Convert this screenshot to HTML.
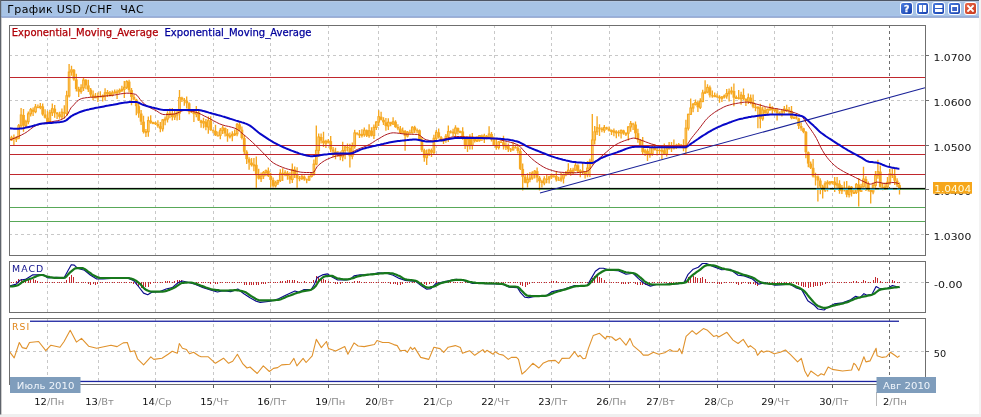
<!DOCTYPE html>
<html lang="ru"><head><meta charset="utf-8"><title>График USD/CHF</title>
<style>html,body{margin:0;padding:0;background:#fff;overflow:hidden}body{width:981px;height:417px}</style></head>
<body>
<svg width="981" height="417" viewBox="0 0 981 417" style="display:block;will-change:transform;font-family:'DejaVu Sans', 'Liberation Sans', sans-serif">
<defs><linearGradient id="tb" x1="0" y1="0" x2="0" y2="1"><stop offset="0" stop-color="#a7c2e7"/><stop offset="0.85" stop-color="#a9c4e8"/><stop offset="1" stop-color="#8eaedb"/></linearGradient><linearGradient id="bb" x1="0" y1="0" x2="1" y2="1"><stop offset="0" stop-color="#4d7fe0"/><stop offset="1" stop-color="#123cab"/></linearGradient><linearGradient id="rb" x1="0" y1="0" x2="1" y2="1"><stop offset="0" stop-color="#e9694a"/><stop offset="1" stop-color="#c6371c"/></linearGradient></defs>
<rect width="981" height="417" fill="#fff"/>
<rect x="979" y="0" width="2" height="417" fill="#f3f3f3"/>
<rect x="0" y="414" width="981" height="3" fill="#efefef"/>
<rect x="0" y="1" width="979" height="15.6" fill="#a7c3e5"/>
<rect x="0" y="1" width="979" height="1" fill="#b4c8e2"/>
<rect x="0" y="15.6" width="979" height="1" fill="#a9c6f3"/>
<rect x="0" y="16.5" width="979" height="1.2" fill="#7890c2"/>
<rect x="0" y="0" width="979" height="1" fill="#4e5665"/>
<rect x="0" y="0" width="1.2" height="414.5" fill="#5f646c"/>
<rect x="1.2" y="17.5" width="0.8" height="397" fill="#c9c9c9"/>
<text x="7.3" y="13.2" font-size="11" fill="#000" xml:space="preserve" textLength="136.3" lengthAdjust="spacing">График USD /CHF  ЧАС</text>
<rect x="900" y="2" width="13" height="13" rx="3" fill="#fff"/>
<rect x="901" y="3" width="11" height="11" rx="2" fill="url(#bb)"/>
<text x="906.7" y="12" font-size="9.4" font-weight="bold" fill="#fff" stroke="#fff" stroke-width="0.3" text-anchor="middle">?</text>
<rect x="916" y="2" width="13" height="13" rx="3" fill="#fff"/>
<rect x="917" y="3" width="11" height="11" rx="2" fill="url(#bb)"/>
<rect x="919" y="5" width="3.2" height="7" fill="#fff"/><rect x="923" y="5" width="3.2" height="7" fill="#fff"/>
<rect x="932" y="2" width="13" height="13" rx="3" fill="#fff"/>
<rect x="933" y="3" width="11" height="11" rx="2" fill="url(#bb)"/>
<rect x="935" y="5" width="7.4" height="3" fill="#fff"/><rect x="935" y="9" width="7.4" height="3" fill="#fff"/>
<rect x="948" y="2" width="13" height="13" rx="3" fill="#fff"/>
<rect x="949" y="3" width="11" height="11" rx="2" fill="url(#bb)"/>
<rect x="951" y="5" width="7.2" height="7.2" fill="#fff"/><rect x="952.2" y="7" width="4.8" height="4" fill="#3b63c8"/>
<rect x="964" y="2" width="13" height="13" rx="3" fill="#fff"/>
<rect x="965" y="3" width="11" height="11" rx="2" fill="url(#rb)"/>
<path d="M967.4 5.4 L973.6 11.6 M973.6 5.4 L967.4 11.6" stroke="#fff" stroke-width="2" fill="none"/>
<g shape-rendering="crispEdges">
<line x1="47.5" y1="25" x2="47.5" y2="255" stroke="#c8c8c8" stroke-dasharray="3 3"/>
<line x1="98.5" y1="25" x2="98.5" y2="255" stroke="#c8c8c8" stroke-dasharray="3 3"/>
<line x1="155.5" y1="25" x2="155.5" y2="255" stroke="#c8c8c8" stroke-dasharray="3 3"/>
<line x1="213.5" y1="25" x2="213.5" y2="255" stroke="#c8c8c8" stroke-dasharray="3 3"/>
<line x1="270.5" y1="25" x2="270.5" y2="255" stroke="#c8c8c8" stroke-dasharray="3 3"/>
<line x1="328.5" y1="25" x2="328.5" y2="255" stroke="#c8c8c8" stroke-dasharray="3 3"/>
<line x1="378.5" y1="25" x2="378.5" y2="255" stroke="#c8c8c8" stroke-dasharray="3 3"/>
<line x1="436.5" y1="25" x2="436.5" y2="255" stroke="#c8c8c8" stroke-dasharray="3 3"/>
<line x1="494.5" y1="25" x2="494.5" y2="255" stroke="#c8c8c8" stroke-dasharray="3 3"/>
<line x1="551.5" y1="25" x2="551.5" y2="255" stroke="#c8c8c8" stroke-dasharray="3 3"/>
<line x1="609.5" y1="25" x2="609.5" y2="255" stroke="#c8c8c8" stroke-dasharray="3 3"/>
<line x1="659.5" y1="25" x2="659.5" y2="255" stroke="#c8c8c8" stroke-dasharray="3 3"/>
<line x1="717.5" y1="25" x2="717.5" y2="255" stroke="#c8c8c8" stroke-dasharray="3 3"/>
<line x1="774.5" y1="25" x2="774.5" y2="255" stroke="#c8c8c8" stroke-dasharray="3 3"/>
<line x1="832.5" y1="25" x2="832.5" y2="255" stroke="#c8c8c8" stroke-dasharray="3 3"/>
<line x1="889.5" y1="25" x2="889.5" y2="255" stroke="#6e6e6e" stroke-dasharray="3 3"/>
<line x1="47.5" y1="261" x2="47.5" y2="312" stroke="#c8c8c8" stroke-dasharray="3 3"/>
<line x1="98.5" y1="261" x2="98.5" y2="312" stroke="#c8c8c8" stroke-dasharray="3 3"/>
<line x1="155.5" y1="261" x2="155.5" y2="312" stroke="#c8c8c8" stroke-dasharray="3 3"/>
<line x1="213.5" y1="261" x2="213.5" y2="312" stroke="#c8c8c8" stroke-dasharray="3 3"/>
<line x1="270.5" y1="261" x2="270.5" y2="312" stroke="#c8c8c8" stroke-dasharray="3 3"/>
<line x1="328.5" y1="261" x2="328.5" y2="312" stroke="#c8c8c8" stroke-dasharray="3 3"/>
<line x1="378.5" y1="261" x2="378.5" y2="312" stroke="#c8c8c8" stroke-dasharray="3 3"/>
<line x1="436.5" y1="261" x2="436.5" y2="312" stroke="#c8c8c8" stroke-dasharray="3 3"/>
<line x1="494.5" y1="261" x2="494.5" y2="312" stroke="#c8c8c8" stroke-dasharray="3 3"/>
<line x1="551.5" y1="261" x2="551.5" y2="312" stroke="#c8c8c8" stroke-dasharray="3 3"/>
<line x1="609.5" y1="261" x2="609.5" y2="312" stroke="#c8c8c8" stroke-dasharray="3 3"/>
<line x1="659.5" y1="261" x2="659.5" y2="312" stroke="#c8c8c8" stroke-dasharray="3 3"/>
<line x1="717.5" y1="261" x2="717.5" y2="312" stroke="#c8c8c8" stroke-dasharray="3 3"/>
<line x1="774.5" y1="261" x2="774.5" y2="312" stroke="#c8c8c8" stroke-dasharray="3 3"/>
<line x1="832.5" y1="261" x2="832.5" y2="312" stroke="#c8c8c8" stroke-dasharray="3 3"/>
<line x1="889.5" y1="261" x2="889.5" y2="312" stroke="#6e6e6e" stroke-dasharray="3 3"/>
<line x1="47.5" y1="318" x2="47.5" y2="384" stroke="#c8c8c8" stroke-dasharray="3 3"/>
<line x1="98.5" y1="318" x2="98.5" y2="384" stroke="#c8c8c8" stroke-dasharray="3 3"/>
<line x1="155.5" y1="318" x2="155.5" y2="384" stroke="#c8c8c8" stroke-dasharray="3 3"/>
<line x1="213.5" y1="318" x2="213.5" y2="384" stroke="#c8c8c8" stroke-dasharray="3 3"/>
<line x1="270.5" y1="318" x2="270.5" y2="384" stroke="#c8c8c8" stroke-dasharray="3 3"/>
<line x1="328.5" y1="318" x2="328.5" y2="384" stroke="#c8c8c8" stroke-dasharray="3 3"/>
<line x1="378.5" y1="318" x2="378.5" y2="384" stroke="#c8c8c8" stroke-dasharray="3 3"/>
<line x1="436.5" y1="318" x2="436.5" y2="384" stroke="#c8c8c8" stroke-dasharray="3 3"/>
<line x1="494.5" y1="318" x2="494.5" y2="384" stroke="#c8c8c8" stroke-dasharray="3 3"/>
<line x1="551.5" y1="318" x2="551.5" y2="384" stroke="#c8c8c8" stroke-dasharray="3 3"/>
<line x1="609.5" y1="318" x2="609.5" y2="384" stroke="#c8c8c8" stroke-dasharray="3 3"/>
<line x1="659.5" y1="318" x2="659.5" y2="384" stroke="#c8c8c8" stroke-dasharray="3 3"/>
<line x1="717.5" y1="318" x2="717.5" y2="384" stroke="#c8c8c8" stroke-dasharray="3 3"/>
<line x1="774.5" y1="318" x2="774.5" y2="384" stroke="#c8c8c8" stroke-dasharray="3 3"/>
<line x1="832.5" y1="318" x2="832.5" y2="384" stroke="#c8c8c8" stroke-dasharray="3 3"/>
<line x1="889.5" y1="318" x2="889.5" y2="384" stroke="#6e6e6e" stroke-dasharray="3 3"/>
<line x1="9" y1="55.5" x2="925" y2="55.5" stroke="#c8c8c8" stroke-dasharray="3 3"/>
<line x1="9" y1="100.5" x2="925" y2="100.5" stroke="#c8c8c8" stroke-dasharray="3 3"/>
<line x1="9" y1="145.5" x2="925" y2="145.5" stroke="#c8c8c8" stroke-dasharray="3 3"/>
<line x1="9" y1="234.5" x2="925" y2="234.5" stroke="#c8c8c8" stroke-dasharray="3 3"/>
<line x1="9" y1="282.5" x2="925" y2="282.5" stroke="#c8c8c8" stroke-dasharray="3 3"/>
<line x1="9" y1="351.5" x2="925" y2="351.5" stroke="#c8c8c8" stroke-dasharray="3 3"/>
</g>
<path d="M11.5 135.7V141.1M13.9 134.4V146.0M16.3 136.2V142.0M18.7 123.9V139.2M21.1 108.0V127.8M23.5 109.1V131.7M25.9 119.7V127.1M28.3 111.6V124.3M30.7 107.9V116.4M33.1 107.4V116.1M35.5 104.1V113.3M37.9 104.4V108.3M40.3 102.9V109.2M42.7 103.4V115.8M45.1 109.3V118.4M47.5 110.8V123.4M49.9 109.7V124.0M52.3 103.5V116.0M54.7 105.1V117.8M57.1 111.9V118.9M59.5 111.8V118.7M61.9 108.6V119.0M64.3 105.2V118.7M66.7 90.7V115.8M69.1 64.0V97.5M71.5 65.8V75.7M73.9 68.9V80.7M76.3 73.8V91.5M78.7 86.7V97.1M81.1 84.3V93.8M83.5 77.5V91.0M85.9 78.9V89.2M88.3 79.7V91.9M90.7 88.1V97.2M93.1 90.5V100.2M95.5 92.9V98.1M97.9 92.6V101.9M100.3 91.2V97.4M102.7 94.5V101.5M105.1 88.2V100.5M107.5 90.0V96.9M109.9 90.9V96.5M112.3 90.5V96.6M114.7 89.6V93.4M117.1 89.5V98.9M119.5 88.6V93.5M121.9 85.8V92.0M124.3 80.9V98.0M126.7 80.3V89.1M129.1 79.7V92.6M131.5 87.9V105.2M133.9 94.7V100.3M136.3 98.8V115.3M138.7 102.3V117.8M141.1 110.0V124.9M143.5 115.7V133.6M145.9 129.1V137.0M148.3 116.6V136.8M150.7 115.3V123.8M153.1 121.7V123.8M155.5 121.7V124.9M157.9 120.3V127.7M160.3 122.1V132.2M162.7 119.0V131.5M165.1 116.5V125.3M167.5 111.2V122.6M169.9 108.2V118.2M172.3 108.1V120.5M174.7 110.7V119.9M177.1 109.7V120.4M179.5 90.0V119.9M181.9 96.8V102.1M184.3 97.9V105.8M186.7 96.4V108.5M189.1 102.2V114.3M191.5 110.5V113.1M193.9 110.9V122.0M196.3 106.0V117.2M198.7 110.0V121.0M201.1 119.7V127.7M203.5 117.7V128.2M205.9 118.9V130.3M208.3 116.6V133.8M210.7 116.2V130.7M213.1 129.6V133.3M215.5 124.7V136.0M217.9 131.6V136.5M220.3 128.1V139.3M222.7 125.6V134.1M225.1 127.5V136.5M227.5 129.1V141.7M229.9 132.4V138.5M232.3 131.3V141.2M234.7 129.5V135.9M237.1 122.9V136.3M239.5 121.6V131.1M241.9 126.4V139.5M244.3 135.1V154.6M246.7 150.2V163.9M249.1 157.2V169.8M251.5 157.9V166.5M253.9 158.1V171.2M256.3 156.6V187.7M258.7 168.7V179.5M261.1 172.6V182.0M263.5 171.1V179.1M265.9 169.6V176.3M268.3 167.4V176.9M270.7 172.8V187.6M273.1 177.4V187.6M275.5 180.7V187.6M277.9 179.7V185.0M280.3 169.3V182.0M282.7 168.3V181.0M285.1 170.2V176.2M287.5 171.0V179.7M289.9 172.3V183.8M292.3 163.5V183.1M294.7 166.4V178.0M297.1 167.3V187.7M299.5 176.1V181.2M301.9 174.6V180.1M304.3 175.4V180.8M306.7 178.6V183.3M309.1 175.8V181.0M311.5 173.4V177.4M313.9 159.6V175.7M316.3 125.6V165.3M318.7 133.4V157.0M321.1 133.6V143.5M323.5 131.7V147.0M325.9 139.7V148.1M328.3 139.0V143.5M330.7 135.9V152.3M333.1 147.1V157.3M335.5 147.8V159.2M337.9 151.0V156.7M340.3 151.4V160.3M342.7 141.8V161.3M345.1 146.1V159.3M347.5 143.6V151.6M349.9 143.8V167.4M352.3 142.4V159.3M354.7 129.7V148.8M357.1 132.3V135.2M359.5 130.1V138.0M361.9 129.2V137.4M364.3 127.5V136.7M366.7 129.5V136.9M369.1 124.3V137.8M371.5 127.3V136.6M373.9 124.4V139.0M376.3 121.3V129.9M378.7 110.3V125.9M381.1 111.7V120.4M383.5 117.2V125.1M385.9 118.1V130.7M388.3 118.3V130.0M390.7 121.7V126.2M393.1 117.2V124.7M395.5 120.2V127.7M397.9 124.3V130.2M400.3 125.9V134.1M402.7 127.4V133.7M405.1 129.9V150.8M407.5 130.9V137.5M409.9 129.7V133.5M412.3 126.3V133.5M414.7 125.8V133.0M417.1 128.5V133.2M419.5 129.4V141.3M421.9 137.0V152.1M424.3 148.7V161.7M426.7 149.5V165.0M429.1 148.8V156.0M431.5 148.6V157.1M433.9 134.8V154.6M436.3 130.1V142.2M438.7 128.5V138.5M441.1 136.0V141.5M443.5 139.3V144.0M445.9 133.9V142.7M448.3 125.4V142.1M450.7 130.2V133.4M453.1 128.8V136.0M455.5 125.3V136.2M457.9 127.5V134.4M460.3 130.7V133.2M462.7 127.2V139.7M465.1 137.0V148.9M467.5 138.5V152.0M469.9 134.2V149.6M472.3 132.9V149.5M474.7 137.9V142.5M477.1 136.3V141.5M479.5 134.9V141.8M481.9 134.4V141.0M484.3 133.8V143.1M486.7 135.0V139.3M489.1 126.3V138.9M491.5 131.9V141.6M493.9 136.5V146.1M496.3 139.1V149.7M498.7 140.9V149.4M501.1 140.2V143.0M503.5 135.8V149.6M505.9 142.3V150.1M508.3 143.6V151.9M510.7 147.9V152.1M513.1 142.2V150.6M515.5 145.1V148.6M517.9 144.4V153.5M520.3 148.6V169.9M522.7 163.5V190.5M525.1 174.1V183.2M527.5 173.2V187.6M529.9 172.0V182.3M532.3 171.2V179.8M534.7 170.0V178.4M537.1 167.4V182.4M539.5 176.0V190.5M541.9 179.8V187.6M544.3 176.2V185.2M546.7 175.1V183.2M549.1 175.7V183.6M551.5 173.6V178.9M553.9 175.1V177.7M556.3 171.1V181.4M558.7 176.8V180.7M561.1 172.8V181.7M563.5 173.5V183.4M565.9 171.0V176.3M568.3 163.3V174.3M570.7 167.9V175.8M573.1 167.7V174.5M575.5 162.7V170.8M577.9 164.3V173.0M580.3 169.3V177.3M582.7 162.7V174.8M585.1 171.2V178.6M587.5 160.9V177.2M589.9 158.8V177.0M592.3 114.0V164.8M594.7 126.0V144.5M597.1 116.2V134.9M599.5 124.3V135.9M601.9 127.2V132.3M604.3 125.0V132.8M606.7 126.8V129.7M609.1 126.6V131.6M611.5 129.5V134.9M613.9 128.5V136.3M616.3 130.3V138.3M618.7 130.3V136.5M621.1 129.5V138.6M623.5 129.8V134.8M625.9 132.4V136.1M628.3 126.3V140.5M630.7 120.9V131.7M633.1 122.7V130.0M635.5 121.6V139.1M637.9 128.8V142.8M640.3 139.3V146.1M642.7 137.1V154.8M645.1 148.7V156.1M647.5 148.5V161.0M649.9 148.1V157.8M652.3 144.6V155.8M654.7 144.1V150.6M657.1 147.6V155.4M659.5 148.2V155.0M661.9 145.7V159.0M664.3 143.4V154.5M666.7 145.1V156.6M669.1 142.0V149.5M671.5 141.9V152.0M673.9 139.5V149.5M676.3 143.7V148.9M678.7 142.9V146.3M681.1 144.1V148.1M683.5 139.2V151.2M685.9 119.8V154.8M688.3 113.7V130.4M690.7 98.6V114.9M693.1 102.9V112.3M695.5 99.4V105.5M697.9 100.6V112.0M700.3 98.2V109.1M702.7 89.8V102.3M705.1 80.3V93.9M707.5 84.3V93.2M709.9 85.5V97.5M712.3 90.5V97.8M714.7 92.4V96.7M717.1 93.4V98.1M719.5 95.2V102.7M721.9 95.9V102.1M724.3 94.6V98.5M726.7 88.9V98.7M729.1 88.6V101.5M731.5 86.7V94.4M733.9 83.4V106.3M736.3 95.4V98.4M738.7 90.1V99.5M741.1 91.8V104.8M743.5 88.4V100.0M745.9 98.2V106.1M748.3 93.4V104.0M750.7 94.4V104.2M753.1 94.4V108.2M755.5 103.8V111.2M757.9 106.2V128.2M760.3 103.7V128.3M762.7 106.6V120.7M765.1 107.0V114.3M767.5 108.5V115.6M769.9 103.4V110.9M772.3 106.3V113.9M774.7 108.8V112.4M777.1 108.0V120.4M779.5 111.6V115.3M781.9 109.8V116.6M784.3 106.1V113.5M786.7 104.8V112.1M789.1 106.9V114.6M791.5 106.0V119.2M793.9 116.6V119.0M796.3 114.9V119.4M798.7 117.7V128.9M801.1 122.6V130.7M803.5 127.7V133.3M805.9 130.9V158.2M808.3 151.6V167.2M810.7 161.5V168.9M813.1 159.0V177.6M815.5 172.8V185.5M817.9 175.6V201.5M820.3 178.2V194.2M822.7 184.8V198.4M825.1 181.2V192.1M827.5 180.2V191.5M829.9 181.0V185.2M832.3 181.0V184.6M834.7 177.1V192.0M837.1 177.0V188.3M839.5 180.2V193.8M841.9 184.9V194.1M844.3 181.4V191.4M846.7 181.1V197.3M849.1 185.6V197.5M851.5 186.0V196.4M853.9 190.0V193.6M856.3 183.0V193.9M858.7 178.1V206.5M861.1 183.8V191.8M863.5 166.8V187.6M865.9 176.3V190.9M868.3 181.6V191.6M870.7 188.4V203.5M873.1 182.6V194.3M875.5 170.9V187.8M877.9 159.7V178.7M880.3 165.5V187.6M882.7 182.7V190.2M885.1 182.4V189.7M887.5 177.1V187.8M889.9 168.8V184.8M892.3 168.4V178.1M894.7 168.2V185.0M897.1 178.2V186.9M899.5 182.6V194.5" stroke="#f6a821" stroke-width="1.35" fill="none"/>
<rect x="10.7" y="137.8" width="1.6" height="2.0" fill="#fcdc9c" stroke="#f6a821" stroke-width="1.1"/>
<rect x="12.5" y="137.8" width="2.8" height="1.0" fill="#f6a821"/>
<rect x="15.5" y="138.1" width="1.6" height="1.0" fill="#fcdc9c" stroke="#f6a821" stroke-width="1.1"/>
<rect x="17.9" y="125.7" width="1.6" height="12.4" fill="#fcdc9c" stroke="#f6a821" stroke-width="1.1"/>
<rect x="20.3" y="115.0" width="1.6" height="10.7" fill="#fcdc9c" stroke="#f6a821" stroke-width="1.1"/>
<rect x="22.1" y="115.0" width="2.8" height="10.7" fill="#f6a821"/>
<rect x="25.1" y="121.7" width="1.6" height="4.0" fill="#fcdc9c" stroke="#f6a821" stroke-width="1.1"/>
<rect x="27.5" y="113.8" width="1.6" height="7.9" fill="#fcdc9c" stroke="#f6a821" stroke-width="1.1"/>
<rect x="29.9" y="109.7" width="1.6" height="4.1" fill="#fcdc9c" stroke="#f6a821" stroke-width="1.1"/>
<rect x="31.7" y="109.7" width="2.8" height="2.1" fill="#f6a821"/>
<rect x="34.7" y="106.9" width="1.6" height="4.8" fill="#fcdc9c" stroke="#f6a821" stroke-width="1.1"/>
<rect x="36.5" y="106.9" width="2.8" height="1.0" fill="#f6a821"/>
<rect x="39.5" y="106.4" width="1.6" height="1.0" fill="#fcdc9c" stroke="#f6a821" stroke-width="1.1"/>
<rect x="41.3" y="106.4" width="2.8" height="8.1" fill="#f6a821"/>
<rect x="43.7" y="114.5" width="2.8" height="3.2" fill="#f6a821"/>
<rect x="46.1" y="117.7" width="2.8" height="4.2" fill="#f6a821"/>
<rect x="49.1" y="112.8" width="1.6" height="9.1" fill="#fcdc9c" stroke="#f6a821" stroke-width="1.1"/>
<rect x="51.5" y="108.7" width="1.6" height="4.1" fill="#fcdc9c" stroke="#f6a821" stroke-width="1.1"/>
<rect x="53.3" y="108.7" width="2.8" height="4.1" fill="#f6a821"/>
<rect x="55.7" y="112.7" width="2.8" height="1.5" fill="#f6a821"/>
<rect x="58.1" y="114.2" width="2.8" height="2.6" fill="#f6a821"/>
<rect x="61.1" y="112.2" width="1.6" height="4.6" fill="#fcdc9c" stroke="#f6a821" stroke-width="1.1"/>
<rect x="62.9" y="112.2" width="2.8" height="1.3" fill="#f6a821"/>
<rect x="65.9" y="95.8" width="1.6" height="17.7" fill="#fcdc9c" stroke="#f6a821" stroke-width="1.1"/>
<rect x="68.3" y="72.1" width="1.6" height="23.8" fill="#fcdc9c" stroke="#f6a821" stroke-width="1.1"/>
<rect x="70.7" y="69.9" width="1.6" height="2.1" fill="#fcdc9c" stroke="#f6a821" stroke-width="1.1"/>
<rect x="72.5" y="69.9" width="2.8" height="9.5" fill="#f6a821"/>
<rect x="74.9" y="79.4" width="2.8" height="9.6" fill="#f6a821"/>
<rect x="77.3" y="89.0" width="2.8" height="2.6" fill="#f6a821"/>
<rect x="80.3" y="87.8" width="1.6" height="3.7" fill="#fcdc9c" stroke="#f6a821" stroke-width="1.1"/>
<rect x="82.7" y="80.0" width="1.6" height="7.8" fill="#fcdc9c" stroke="#f6a821" stroke-width="1.1"/>
<rect x="84.5" y="80.0" width="2.8" height="5.4" fill="#f6a821"/>
<rect x="86.9" y="85.4" width="2.8" height="4.2" fill="#f6a821"/>
<rect x="89.3" y="89.6" width="2.8" height="5.0" fill="#f6a821"/>
<rect x="91.7" y="94.6" width="2.8" height="2.9" fill="#f6a821"/>
<rect x="94.7" y="96.8" width="1.6" height="1.0" fill="#fcdc9c" stroke="#f6a821" stroke-width="1.1"/>
<rect x="97.1" y="96.1" width="1.6" height="1.0" fill="#fcdc9c" stroke="#f6a821" stroke-width="1.1"/>
<rect x="98.9" y="96.1" width="2.8" height="1.0" fill="#f6a821"/>
<rect x="101.9" y="96.0" width="1.6" height="1.0" fill="#fcdc9c" stroke="#f6a821" stroke-width="1.1"/>
<rect x="104.3" y="92.8" width="1.6" height="3.2" fill="#fcdc9c" stroke="#f6a821" stroke-width="1.1"/>
<rect x="106.7" y="92.5" width="1.6" height="1.0" fill="#fcdc9c" stroke="#f6a821" stroke-width="1.1"/>
<rect x="108.5" y="92.5" width="2.8" height="3.0" fill="#f6a821"/>
<rect x="111.5" y="92.9" width="1.6" height="2.6" fill="#fcdc9c" stroke="#f6a821" stroke-width="1.1"/>
<rect x="113.9" y="92.0" width="1.6" height="1.0" fill="#fcdc9c" stroke="#f6a821" stroke-width="1.1"/>
<rect x="116.3" y="91.9" width="1.6" height="1.0" fill="#fcdc9c" stroke="#f6a821" stroke-width="1.1"/>
<rect x="118.7" y="90.5" width="1.6" height="1.4" fill="#fcdc9c" stroke="#f6a821" stroke-width="1.1"/>
<rect x="121.1" y="89.3" width="1.6" height="1.2" fill="#fcdc9c" stroke="#f6a821" stroke-width="1.1"/>
<rect x="123.5" y="87.3" width="1.6" height="2.0" fill="#fcdc9c" stroke="#f6a821" stroke-width="1.1"/>
<rect x="125.9" y="81.6" width="1.6" height="5.7" fill="#fcdc9c" stroke="#f6a821" stroke-width="1.1"/>
<rect x="127.7" y="81.6" width="2.8" height="8.5" fill="#f6a821"/>
<rect x="130.1" y="90.1" width="2.8" height="6.9" fill="#f6a821"/>
<rect x="132.5" y="96.9" width="2.8" height="2.6" fill="#f6a821"/>
<rect x="134.9" y="99.5" width="2.8" height="6.6" fill="#f6a821"/>
<rect x="137.3" y="106.1" width="2.8" height="7.4" fill="#f6a821"/>
<rect x="139.7" y="113.5" width="2.8" height="8.1" fill="#f6a821"/>
<rect x="142.1" y="121.6" width="2.8" height="10.3" fill="#f6a821"/>
<rect x="145.1" y="131.6" width="1.6" height="1.0" fill="#fcdc9c" stroke="#f6a821" stroke-width="1.1"/>
<rect x="147.5" y="120.6" width="1.6" height="11.1" fill="#fcdc9c" stroke="#f6a821" stroke-width="1.1"/>
<rect x="149.3" y="120.6" width="2.8" height="2.1" fill="#f6a821"/>
<rect x="152.3" y="122.6" width="1.6" height="1.0" fill="#fcdc9c" stroke="#f6a821" stroke-width="1.1"/>
<rect x="154.1" y="122.6" width="2.8" height="1.5" fill="#f6a821"/>
<rect x="156.5" y="124.1" width="2.8" height="2.1" fill="#f6a821"/>
<rect x="158.9" y="126.2" width="2.8" height="2.5" fill="#f6a821"/>
<rect x="161.9" y="119.9" width="1.6" height="8.9" fill="#fcdc9c" stroke="#f6a821" stroke-width="1.1"/>
<rect x="164.3" y="119.1" width="1.6" height="1.0" fill="#fcdc9c" stroke="#f6a821" stroke-width="1.1"/>
<rect x="166.7" y="113.7" width="1.6" height="5.4" fill="#fcdc9c" stroke="#f6a821" stroke-width="1.1"/>
<rect x="169.1" y="113.4" width="1.6" height="1.0" fill="#fcdc9c" stroke="#f6a821" stroke-width="1.1"/>
<rect x="170.9" y="113.4" width="2.8" height="3.6" fill="#f6a821"/>
<rect x="173.9" y="114.9" width="1.6" height="2.1" fill="#fcdc9c" stroke="#f6a821" stroke-width="1.1"/>
<rect x="176.3" y="113.1" width="1.6" height="1.8" fill="#fcdc9c" stroke="#f6a821" stroke-width="1.1"/>
<rect x="178.7" y="97.6" width="1.6" height="15.5" fill="#fcdc9c" stroke="#f6a821" stroke-width="1.1"/>
<rect x="180.5" y="97.6" width="2.8" height="2.1" fill="#f6a821"/>
<rect x="182.9" y="99.7" width="2.8" height="1.0" fill="#f6a821"/>
<rect x="185.3" y="100.5" width="2.8" height="2.8" fill="#f6a821"/>
<rect x="187.7" y="103.3" width="2.8" height="8.1" fill="#f6a821"/>
<rect x="190.1" y="111.4" width="2.8" height="1.0" fill="#f6a821"/>
<rect x="192.5" y="112.2" width="2.8" height="1.9" fill="#f6a821"/>
<rect x="195.5" y="112.5" width="1.6" height="1.6" fill="#fcdc9c" stroke="#f6a821" stroke-width="1.1"/>
<rect x="197.3" y="112.5" width="2.8" height="8.0" fill="#f6a821"/>
<rect x="199.7" y="120.4" width="2.8" height="2.5" fill="#f6a821"/>
<rect x="202.7" y="121.6" width="1.6" height="1.4" fill="#fcdc9c" stroke="#f6a821" stroke-width="1.1"/>
<rect x="204.5" y="121.6" width="2.8" height="5.5" fill="#f6a821"/>
<rect x="207.5" y="120.6" width="1.6" height="6.4" fill="#fcdc9c" stroke="#f6a821" stroke-width="1.1"/>
<rect x="209.3" y="120.6" width="2.8" height="9.6" fill="#f6a821"/>
<rect x="211.7" y="130.2" width="2.8" height="1.0" fill="#f6a821"/>
<rect x="214.1" y="130.9" width="2.8" height="4.4" fill="#f6a821"/>
<rect x="216.5" y="135.3" width="2.8" height="1.0" fill="#f6a821"/>
<rect x="219.5" y="130.3" width="1.6" height="5.0" fill="#fcdc9c" stroke="#f6a821" stroke-width="1.1"/>
<rect x="221.9" y="128.0" width="1.6" height="2.3" fill="#fcdc9c" stroke="#f6a821" stroke-width="1.1"/>
<rect x="223.7" y="128.0" width="2.8" height="5.4" fill="#f6a821"/>
<rect x="226.1" y="133.4" width="2.8" height="2.8" fill="#f6a821"/>
<rect x="229.1" y="135.8" width="1.6" height="1.0" fill="#fcdc9c" stroke="#f6a821" stroke-width="1.1"/>
<rect x="231.5" y="134.3" width="1.6" height="1.5" fill="#fcdc9c" stroke="#f6a821" stroke-width="1.1"/>
<rect x="233.9" y="133.8" width="1.6" height="1.0" fill="#fcdc9c" stroke="#f6a821" stroke-width="1.1"/>
<rect x="236.3" y="124.4" width="1.6" height="9.4" fill="#fcdc9c" stroke="#f6a821" stroke-width="1.1"/>
<rect x="238.1" y="124.4" width="2.8" height="5.3" fill="#f6a821"/>
<rect x="240.5" y="129.7" width="2.8" height="8.3" fill="#f6a821"/>
<rect x="242.9" y="138.1" width="2.8" height="13.7" fill="#f6a821"/>
<rect x="245.3" y="151.7" width="2.8" height="7.4" fill="#f6a821"/>
<rect x="247.7" y="159.1" width="2.8" height="3.5" fill="#f6a821"/>
<rect x="250.1" y="162.6" width="2.8" height="2.5" fill="#f6a821"/>
<rect x="253.1" y="164.8" width="1.6" height="1.0" fill="#fcdc9c" stroke="#f6a821" stroke-width="1.1"/>
<rect x="254.9" y="164.8" width="2.8" height="10.4" fill="#f6a821"/>
<rect x="257.3" y="175.2" width="2.8" height="3.4" fill="#f6a821"/>
<rect x="260.3" y="176.0" width="1.6" height="2.6" fill="#fcdc9c" stroke="#f6a821" stroke-width="1.1"/>
<rect x="262.7" y="172.5" width="1.6" height="3.5" fill="#fcdc9c" stroke="#f6a821" stroke-width="1.1"/>
<rect x="265.1" y="170.7" width="1.6" height="1.8" fill="#fcdc9c" stroke="#f6a821" stroke-width="1.1"/>
<rect x="266.9" y="170.7" width="2.8" height="5.3" fill="#f6a821"/>
<rect x="269.3" y="176.0" width="2.8" height="3.9" fill="#f6a821"/>
<rect x="271.7" y="179.9" width="2.8" height="5.9" fill="#f6a821"/>
<rect x="274.7" y="182.8" width="1.6" height="3.0" fill="#fcdc9c" stroke="#f6a821" stroke-width="1.1"/>
<rect x="277.1" y="180.5" width="1.6" height="2.3" fill="#fcdc9c" stroke="#f6a821" stroke-width="1.1"/>
<rect x="279.5" y="173.1" width="1.6" height="7.4" fill="#fcdc9c" stroke="#f6a821" stroke-width="1.1"/>
<rect x="281.3" y="173.1" width="2.8" height="1.7" fill="#f6a821"/>
<rect x="284.3" y="172.8" width="1.6" height="1.9" fill="#fcdc9c" stroke="#f6a821" stroke-width="1.1"/>
<rect x="286.1" y="172.8" width="2.8" height="3.3" fill="#f6a821"/>
<rect x="288.5" y="176.1" width="2.8" height="3.4" fill="#f6a821"/>
<rect x="291.5" y="169.5" width="1.6" height="10.0" fill="#fcdc9c" stroke="#f6a821" stroke-width="1.1"/>
<rect x="293.3" y="169.5" width="2.8" height="5.3" fill="#f6a821"/>
<rect x="295.7" y="174.8" width="2.8" height="3.5" fill="#f6a821"/>
<rect x="298.1" y="178.2" width="2.8" height="1.0" fill="#f6a821"/>
<rect x="301.1" y="176.6" width="1.6" height="1.8" fill="#fcdc9c" stroke="#f6a821" stroke-width="1.1"/>
<rect x="302.9" y="176.6" width="2.8" height="2.7" fill="#f6a821"/>
<rect x="305.3" y="179.3" width="2.8" height="1.0" fill="#f6a821"/>
<rect x="308.3" y="176.3" width="1.6" height="3.8" fill="#fcdc9c" stroke="#f6a821" stroke-width="1.1"/>
<rect x="310.7" y="173.9" width="1.6" height="2.5" fill="#fcdc9c" stroke="#f6a821" stroke-width="1.1"/>
<rect x="313.1" y="164.2" width="1.6" height="9.7" fill="#fcdc9c" stroke="#f6a821" stroke-width="1.1"/>
<rect x="315.5" y="150.4" width="1.6" height="13.7" fill="#fcdc9c" stroke="#f6a821" stroke-width="1.1"/>
<rect x="317.9" y="137.0" width="1.6" height="13.4" fill="#fcdc9c" stroke="#f6a821" stroke-width="1.1"/>
<rect x="319.7" y="137.0" width="2.8" height="3.6" fill="#f6a821"/>
<rect x="322.1" y="140.6" width="2.8" height="2.6" fill="#f6a821"/>
<rect x="325.1" y="141.4" width="1.6" height="1.8" fill="#fcdc9c" stroke="#f6a821" stroke-width="1.1"/>
<rect x="327.5" y="141.1" width="1.6" height="1.0" fill="#fcdc9c" stroke="#f6a821" stroke-width="1.1"/>
<rect x="329.3" y="141.1" width="2.8" height="8.4" fill="#f6a821"/>
<rect x="331.7" y="149.5" width="2.8" height="2.0" fill="#f6a821"/>
<rect x="334.1" y="151.5" width="2.8" height="3.7" fill="#f6a821"/>
<rect x="337.1" y="153.8" width="1.6" height="1.4" fill="#fcdc9c" stroke="#f6a821" stroke-width="1.1"/>
<rect x="338.9" y="153.8" width="2.8" height="3.0" fill="#f6a821"/>
<rect x="341.9" y="150.5" width="1.6" height="6.4" fill="#fcdc9c" stroke="#f6a821" stroke-width="1.1"/>
<rect x="344.3" y="146.9" width="1.6" height="3.6" fill="#fcdc9c" stroke="#f6a821" stroke-width="1.1"/>
<rect x="346.1" y="146.9" width="2.8" height="1.1" fill="#f6a821"/>
<rect x="348.5" y="148.0" width="2.8" height="8.3" fill="#f6a821"/>
<rect x="351.5" y="146.5" width="1.6" height="9.7" fill="#fcdc9c" stroke="#f6a821" stroke-width="1.1"/>
<rect x="353.9" y="132.9" width="1.6" height="13.6" fill="#fcdc9c" stroke="#f6a821" stroke-width="1.1"/>
<rect x="355.7" y="132.9" width="2.8" height="1.0" fill="#f6a821"/>
<rect x="358.1" y="133.9" width="2.8" height="1.6" fill="#f6a821"/>
<rect x="361.1" y="134.4" width="1.6" height="1.1" fill="#fcdc9c" stroke="#f6a821" stroke-width="1.1"/>
<rect x="363.5" y="130.2" width="1.6" height="4.2" fill="#fcdc9c" stroke="#f6a821" stroke-width="1.1"/>
<rect x="365.3" y="130.2" width="2.8" height="5.5" fill="#f6a821"/>
<rect x="368.3" y="130.7" width="1.6" height="5.0" fill="#fcdc9c" stroke="#f6a821" stroke-width="1.1"/>
<rect x="370.1" y="130.7" width="2.8" height="4.9" fill="#f6a821"/>
<rect x="373.1" y="127.4" width="1.6" height="8.1" fill="#fcdc9c" stroke="#f6a821" stroke-width="1.1"/>
<rect x="375.5" y="122.0" width="1.6" height="5.4" fill="#fcdc9c" stroke="#f6a821" stroke-width="1.1"/>
<rect x="377.9" y="116.7" width="1.6" height="5.3" fill="#fcdc9c" stroke="#f6a821" stroke-width="1.1"/>
<rect x="379.7" y="116.7" width="2.8" height="3.1" fill="#f6a821"/>
<rect x="382.1" y="119.8" width="2.8" height="2.6" fill="#f6a821"/>
<rect x="384.5" y="122.4" width="2.8" height="3.7" fill="#f6a821"/>
<rect x="387.5" y="122.2" width="1.6" height="3.8" fill="#fcdc9c" stroke="#f6a821" stroke-width="1.1"/>
<rect x="389.3" y="122.2" width="2.8" height="1.9" fill="#f6a821"/>
<rect x="392.3" y="121.7" width="1.6" height="2.5" fill="#fcdc9c" stroke="#f6a821" stroke-width="1.1"/>
<rect x="394.1" y="121.7" width="2.8" height="5.4" fill="#f6a821"/>
<rect x="396.5" y="127.0" width="2.8" height="1.5" fill="#f6a821"/>
<rect x="398.9" y="128.5" width="2.8" height="4.5" fill="#f6a821"/>
<rect x="401.9" y="131.0" width="1.6" height="2.1" fill="#fcdc9c" stroke="#f6a821" stroke-width="1.1"/>
<rect x="403.7" y="131.0" width="2.8" height="5.0" fill="#f6a821"/>
<rect x="406.7" y="132.2" width="1.6" height="3.8" fill="#fcdc9c" stroke="#f6a821" stroke-width="1.1"/>
<rect x="408.5" y="132.2" width="2.8" height="1.0" fill="#f6a821"/>
<rect x="411.5" y="127.2" width="1.6" height="5.6" fill="#fcdc9c" stroke="#f6a821" stroke-width="1.1"/>
<rect x="413.3" y="127.2" width="2.8" height="3.0" fill="#f6a821"/>
<rect x="415.7" y="130.2" width="2.8" height="1.0" fill="#f6a821"/>
<rect x="418.1" y="130.3" width="2.8" height="8.9" fill="#f6a821"/>
<rect x="420.5" y="139.2" width="2.8" height="11.0" fill="#f6a821"/>
<rect x="422.9" y="150.2" width="2.8" height="7.4" fill="#f6a821"/>
<rect x="425.9" y="153.6" width="1.6" height="4.1" fill="#fcdc9c" stroke="#f6a821" stroke-width="1.1"/>
<rect x="428.3" y="150.1" width="1.6" height="3.4" fill="#fcdc9c" stroke="#f6a821" stroke-width="1.1"/>
<rect x="430.1" y="150.1" width="2.8" height="2.4" fill="#f6a821"/>
<rect x="433.1" y="138.3" width="1.6" height="14.2" fill="#fcdc9c" stroke="#f6a821" stroke-width="1.1"/>
<rect x="435.5" y="132.3" width="1.6" height="6.0" fill="#fcdc9c" stroke="#f6a821" stroke-width="1.1"/>
<rect x="437.3" y="132.3" width="2.8" height="4.9" fill="#f6a821"/>
<rect x="439.7" y="137.2" width="2.8" height="3.7" fill="#f6a821"/>
<rect x="442.7" y="139.9" width="1.6" height="1.0" fill="#fcdc9c" stroke="#f6a821" stroke-width="1.1"/>
<rect x="445.1" y="136.3" width="1.6" height="3.6" fill="#fcdc9c" stroke="#f6a821" stroke-width="1.1"/>
<rect x="447.5" y="131.5" width="1.6" height="4.8" fill="#fcdc9c" stroke="#f6a821" stroke-width="1.1"/>
<rect x="449.3" y="131.5" width="2.8" height="1.0" fill="#f6a821"/>
<rect x="451.7" y="131.6" width="2.8" height="1.8" fill="#f6a821"/>
<rect x="454.7" y="128.0" width="1.6" height="5.3" fill="#fcdc9c" stroke="#f6a821" stroke-width="1.1"/>
<rect x="456.5" y="128.0" width="2.8" height="3.7" fill="#f6a821"/>
<rect x="459.5" y="131.4" width="1.6" height="1.0" fill="#fcdc9c" stroke="#f6a821" stroke-width="1.1"/>
<rect x="461.3" y="131.4" width="2.8" height="6.2" fill="#f6a821"/>
<rect x="463.7" y="137.5" width="2.8" height="8.3" fill="#f6a821"/>
<rect x="466.7" y="139.1" width="1.6" height="6.7" fill="#fcdc9c" stroke="#f6a821" stroke-width="1.1"/>
<rect x="468.5" y="139.1" width="2.8" height="6.1" fill="#f6a821"/>
<rect x="471.5" y="138.6" width="1.6" height="6.6" fill="#fcdc9c" stroke="#f6a821" stroke-width="1.1"/>
<rect x="473.3" y="138.6" width="2.8" height="2.4" fill="#f6a821"/>
<rect x="476.3" y="140.3" width="1.6" height="1.0" fill="#fcdc9c" stroke="#f6a821" stroke-width="1.1"/>
<rect x="478.7" y="135.6" width="1.6" height="4.7" fill="#fcdc9c" stroke="#f6a821" stroke-width="1.1"/>
<rect x="480.5" y="135.6" width="2.8" height="2.0" fill="#f6a821"/>
<rect x="483.5" y="135.9" width="1.6" height="1.7" fill="#fcdc9c" stroke="#f6a821" stroke-width="1.1"/>
<rect x="485.3" y="135.9" width="2.8" height="1.4" fill="#f6a821"/>
<rect x="488.3" y="134.0" width="1.6" height="3.3" fill="#fcdc9c" stroke="#f6a821" stroke-width="1.1"/>
<rect x="490.1" y="134.0" width="2.8" height="5.3" fill="#f6a821"/>
<rect x="492.5" y="139.3" width="2.8" height="6.3" fill="#f6a821"/>
<rect x="494.9" y="145.6" width="2.8" height="2.0" fill="#f6a821"/>
<rect x="497.9" y="141.9" width="1.6" height="5.6" fill="#fcdc9c" stroke="#f6a821" stroke-width="1.1"/>
<rect x="499.7" y="141.9" width="2.8" height="1.0" fill="#f6a821"/>
<rect x="502.1" y="142.3" width="2.8" height="3.9" fill="#f6a821"/>
<rect x="505.1" y="146.1" width="1.6" height="1.0" fill="#fcdc9c" stroke="#f6a821" stroke-width="1.1"/>
<rect x="506.9" y="146.1" width="2.8" height="3.2" fill="#f6a821"/>
<rect x="509.3" y="149.3" width="2.8" height="1.0" fill="#f6a821"/>
<rect x="512.3" y="147.2" width="1.6" height="2.7" fill="#fcdc9c" stroke="#f6a821" stroke-width="1.1"/>
<rect x="514.1" y="147.2" width="2.8" height="1.0" fill="#f6a821"/>
<rect x="516.5" y="147.7" width="2.8" height="3.2" fill="#f6a821"/>
<rect x="518.9" y="150.9" width="2.8" height="18.0" fill="#f6a821"/>
<rect x="521.3" y="168.9" width="2.8" height="7.9" fill="#f6a821"/>
<rect x="523.7" y="176.8" width="2.8" height="5.9" fill="#f6a821"/>
<rect x="526.7" y="179.4" width="1.6" height="3.3" fill="#fcdc9c" stroke="#f6a821" stroke-width="1.1"/>
<rect x="529.1" y="178.1" width="1.6" height="1.3" fill="#fcdc9c" stroke="#f6a821" stroke-width="1.1"/>
<rect x="531.5" y="173.1" width="1.6" height="5.0" fill="#fcdc9c" stroke="#f6a821" stroke-width="1.1"/>
<rect x="533.9" y="171.2" width="1.6" height="2.0" fill="#fcdc9c" stroke="#f6a821" stroke-width="1.1"/>
<rect x="535.7" y="171.2" width="2.8" height="6.4" fill="#f6a821"/>
<rect x="538.1" y="177.6" width="2.8" height="3.6" fill="#f6a821"/>
<rect x="540.5" y="181.1" width="2.8" height="1.9" fill="#f6a821"/>
<rect x="543.5" y="178.8" width="1.6" height="4.2" fill="#fcdc9c" stroke="#f6a821" stroke-width="1.1"/>
<rect x="545.3" y="178.8" width="2.8" height="1.0" fill="#f6a821"/>
<rect x="548.3" y="177.0" width="1.6" height="2.0" fill="#fcdc9c" stroke="#f6a821" stroke-width="1.1"/>
<rect x="550.7" y="175.8" width="1.6" height="1.1" fill="#fcdc9c" stroke="#f6a821" stroke-width="1.1"/>
<rect x="552.5" y="175.8" width="2.8" height="1.0" fill="#f6a821"/>
<rect x="554.9" y="176.0" width="2.8" height="3.7" fill="#f6a821"/>
<rect x="557.3" y="179.7" width="2.8" height="1.0" fill="#f6a821"/>
<rect x="560.3" y="178.1" width="1.6" height="1.8" fill="#fcdc9c" stroke="#f6a821" stroke-width="1.1"/>
<rect x="562.7" y="174.6" width="1.6" height="3.5" fill="#fcdc9c" stroke="#f6a821" stroke-width="1.1"/>
<rect x="565.1" y="173.7" width="1.6" height="1.0" fill="#fcdc9c" stroke="#f6a821" stroke-width="1.1"/>
<rect x="567.5" y="170.2" width="1.6" height="3.5" fill="#fcdc9c" stroke="#f6a821" stroke-width="1.1"/>
<rect x="569.3" y="170.2" width="2.8" height="2.3" fill="#f6a821"/>
<rect x="572.3" y="170.2" width="1.6" height="2.3" fill="#fcdc9c" stroke="#f6a821" stroke-width="1.1"/>
<rect x="574.7" y="165.3" width="1.6" height="4.8" fill="#fcdc9c" stroke="#f6a821" stroke-width="1.1"/>
<rect x="576.5" y="165.3" width="2.8" height="6.2" fill="#f6a821"/>
<rect x="579.5" y="170.8" width="1.6" height="1.0" fill="#fcdc9c" stroke="#f6a821" stroke-width="1.1"/>
<rect x="581.3" y="170.8" width="2.8" height="1.5" fill="#f6a821"/>
<rect x="583.7" y="172.2" width="2.8" height="2.6" fill="#f6a821"/>
<rect x="586.7" y="168.1" width="1.6" height="6.7" fill="#fcdc9c" stroke="#f6a821" stroke-width="1.1"/>
<rect x="589.1" y="161.3" width="1.6" height="6.7" fill="#fcdc9c" stroke="#f6a821" stroke-width="1.1"/>
<rect x="591.5" y="140.0" width="1.6" height="21.3" fill="#fcdc9c" stroke="#f6a821" stroke-width="1.1"/>
<rect x="593.9" y="131.8" width="1.6" height="8.2" fill="#fcdc9c" stroke="#f6a821" stroke-width="1.1"/>
<rect x="596.3" y="127.7" width="1.6" height="4.1" fill="#fcdc9c" stroke="#f6a821" stroke-width="1.1"/>
<rect x="598.1" y="127.7" width="2.8" height="1.0" fill="#f6a821"/>
<rect x="600.5" y="128.5" width="2.8" height="1.7" fill="#f6a821"/>
<rect x="603.5" y="127.5" width="1.6" height="2.7" fill="#fcdc9c" stroke="#f6a821" stroke-width="1.1"/>
<rect x="605.3" y="127.5" width="2.8" height="1.2" fill="#f6a821"/>
<rect x="607.7" y="128.7" width="2.8" height="2.0" fill="#f6a821"/>
<rect x="610.7" y="130.5" width="1.6" height="1.0" fill="#fcdc9c" stroke="#f6a821" stroke-width="1.1"/>
<rect x="612.5" y="130.5" width="2.8" height="2.2" fill="#f6a821"/>
<rect x="615.5" y="131.9" width="1.6" height="1.0" fill="#fcdc9c" stroke="#f6a821" stroke-width="1.1"/>
<rect x="617.3" y="131.9" width="2.8" height="1.2" fill="#f6a821"/>
<rect x="620.3" y="130.4" width="1.6" height="2.7" fill="#fcdc9c" stroke="#f6a821" stroke-width="1.1"/>
<rect x="622.1" y="130.4" width="2.8" height="3.0" fill="#f6a821"/>
<rect x="625.1" y="133.2" width="1.6" height="1.0" fill="#fcdc9c" stroke="#f6a821" stroke-width="1.1"/>
<rect x="627.5" y="126.9" width="1.6" height="6.3" fill="#fcdc9c" stroke="#f6a821" stroke-width="1.1"/>
<rect x="629.9" y="123.6" width="1.6" height="3.3" fill="#fcdc9c" stroke="#f6a821" stroke-width="1.1"/>
<rect x="631.7" y="123.6" width="2.8" height="1.0" fill="#f6a821"/>
<rect x="634.1" y="124.5" width="2.8" height="8.8" fill="#f6a821"/>
<rect x="636.5" y="133.2" width="2.8" height="6.8" fill="#f6a821"/>
<rect x="638.9" y="140.0" width="2.8" height="5.2" fill="#f6a821"/>
<rect x="641.3" y="145.3" width="2.8" height="6.9" fill="#f6a821"/>
<rect x="644.3" y="150.8" width="1.6" height="1.4" fill="#fcdc9c" stroke="#f6a821" stroke-width="1.1"/>
<rect x="646.1" y="150.8" width="2.8" height="4.1" fill="#f6a821"/>
<rect x="649.1" y="153.6" width="1.6" height="1.3" fill="#fcdc9c" stroke="#f6a821" stroke-width="1.1"/>
<rect x="651.5" y="147.4" width="1.6" height="6.2" fill="#fcdc9c" stroke="#f6a821" stroke-width="1.1"/>
<rect x="653.3" y="147.4" width="2.8" height="2.5" fill="#f6a821"/>
<rect x="655.7" y="149.9" width="2.8" height="1.0" fill="#f6a821"/>
<rect x="658.1" y="149.9" width="2.8" height="1.0" fill="#f6a821"/>
<rect x="661.1" y="150.3" width="1.6" height="1.0" fill="#fcdc9c" stroke="#f6a821" stroke-width="1.1"/>
<rect x="662.9" y="150.3" width="2.8" height="3.6" fill="#f6a821"/>
<rect x="665.9" y="148.7" width="1.6" height="5.2" fill="#fcdc9c" stroke="#f6a821" stroke-width="1.1"/>
<rect x="668.3" y="145.9" width="1.6" height="2.8" fill="#fcdc9c" stroke="#f6a821" stroke-width="1.1"/>
<rect x="670.1" y="145.9" width="2.8" height="2.3" fill="#f6a821"/>
<rect x="673.1" y="146.2" width="1.6" height="2.0" fill="#fcdc9c" stroke="#f6a821" stroke-width="1.1"/>
<rect x="675.5" y="145.6" width="1.6" height="1.0" fill="#fcdc9c" stroke="#f6a821" stroke-width="1.1"/>
<rect x="677.9" y="144.7" width="1.6" height="1.0" fill="#fcdc9c" stroke="#f6a821" stroke-width="1.1"/>
<rect x="679.7" y="144.7" width="2.8" height="1.0" fill="#f6a821"/>
<rect x="682.1" y="145.2" width="2.8" height="3.0" fill="#f6a821"/>
<rect x="685.1" y="128.2" width="1.6" height="20.0" fill="#fcdc9c" stroke="#f6a821" stroke-width="1.1"/>
<rect x="687.5" y="114.3" width="1.6" height="13.9" fill="#fcdc9c" stroke="#f6a821" stroke-width="1.1"/>
<rect x="689.9" y="108.0" width="1.6" height="6.3" fill="#fcdc9c" stroke="#f6a821" stroke-width="1.1"/>
<rect x="692.3" y="104.3" width="1.6" height="3.7" fill="#fcdc9c" stroke="#f6a821" stroke-width="1.1"/>
<rect x="694.7" y="102.5" width="1.6" height="1.9" fill="#fcdc9c" stroke="#f6a821" stroke-width="1.1"/>
<rect x="696.5" y="102.5" width="2.8" height="4.8" fill="#f6a821"/>
<rect x="699.5" y="101.5" width="1.6" height="5.8" fill="#fcdc9c" stroke="#f6a821" stroke-width="1.1"/>
<rect x="701.9" y="92.9" width="1.6" height="8.6" fill="#fcdc9c" stroke="#f6a821" stroke-width="1.1"/>
<rect x="704.3" y="92.0" width="1.6" height="1.0" fill="#fcdc9c" stroke="#f6a821" stroke-width="1.1"/>
<rect x="706.7" y="87.4" width="1.6" height="4.7" fill="#fcdc9c" stroke="#f6a821" stroke-width="1.1"/>
<rect x="708.5" y="87.4" width="2.8" height="7.9" fill="#f6a821"/>
<rect x="710.9" y="95.3" width="2.8" height="1.0" fill="#f6a821"/>
<rect x="713.9" y="95.7" width="1.6" height="1.0" fill="#fcdc9c" stroke="#f6a821" stroke-width="1.1"/>
<rect x="715.7" y="95.7" width="2.8" height="1.1" fill="#f6a821"/>
<rect x="718.1" y="96.8" width="2.8" height="1.5" fill="#f6a821"/>
<rect x="721.1" y="97.0" width="1.6" height="1.4" fill="#fcdc9c" stroke="#f6a821" stroke-width="1.1"/>
<rect x="723.5" y="96.0" width="1.6" height="1.0" fill="#fcdc9c" stroke="#f6a821" stroke-width="1.1"/>
<rect x="725.9" y="93.6" width="1.6" height="2.3" fill="#fcdc9c" stroke="#f6a821" stroke-width="1.1"/>
<rect x="728.3" y="91.9" width="1.6" height="1.8" fill="#fcdc9c" stroke="#f6a821" stroke-width="1.1"/>
<rect x="730.7" y="91.0" width="1.6" height="1.0" fill="#fcdc9c" stroke="#f6a821" stroke-width="1.1"/>
<rect x="732.5" y="91.0" width="2.8" height="6.7" fill="#f6a821"/>
<rect x="735.5" y="97.5" width="1.6" height="1.0" fill="#fcdc9c" stroke="#f6a821" stroke-width="1.1"/>
<rect x="737.3" y="97.5" width="2.8" height="1.3" fill="#f6a821"/>
<rect x="740.3" y="95.0" width="1.6" height="3.8" fill="#fcdc9c" stroke="#f6a821" stroke-width="1.1"/>
<rect x="742.1" y="95.0" width="2.8" height="4.0" fill="#f6a821"/>
<rect x="744.5" y="99.0" width="2.8" height="2.1" fill="#f6a821"/>
<rect x="747.5" y="97.7" width="1.6" height="3.4" fill="#fcdc9c" stroke="#f6a821" stroke-width="1.1"/>
<rect x="749.3" y="97.7" width="2.8" height="4.4" fill="#f6a821"/>
<rect x="751.7" y="102.1" width="2.8" height="4.6" fill="#f6a821"/>
<rect x="754.1" y="106.7" width="2.8" height="1.2" fill="#f6a821"/>
<rect x="757.1" y="107.3" width="1.6" height="1.0" fill="#fcdc9c" stroke="#f6a821" stroke-width="1.1"/>
<rect x="758.9" y="107.3" width="2.8" height="11.5" fill="#f6a821"/>
<rect x="761.9" y="110.0" width="1.6" height="8.8" fill="#fcdc9c" stroke="#f6a821" stroke-width="1.1"/>
<rect x="763.7" y="110.0" width="2.8" height="2.9" fill="#f6a821"/>
<rect x="766.7" y="109.5" width="1.6" height="3.5" fill="#fcdc9c" stroke="#f6a821" stroke-width="1.1"/>
<rect x="769.1" y="107.4" width="1.6" height="2.1" fill="#fcdc9c" stroke="#f6a821" stroke-width="1.1"/>
<rect x="770.9" y="107.4" width="2.8" height="2.8" fill="#f6a821"/>
<rect x="773.9" y="109.6" width="1.6" height="1.0" fill="#fcdc9c" stroke="#f6a821" stroke-width="1.1"/>
<rect x="775.7" y="109.6" width="2.8" height="3.5" fill="#f6a821"/>
<rect x="778.1" y="113.1" width="2.8" height="1.6" fill="#f6a821"/>
<rect x="781.1" y="111.1" width="1.6" height="3.6" fill="#fcdc9c" stroke="#f6a821" stroke-width="1.1"/>
<rect x="783.5" y="109.0" width="1.6" height="2.1" fill="#fcdc9c" stroke="#f6a821" stroke-width="1.1"/>
<rect x="785.3" y="109.0" width="2.8" height="1.0" fill="#f6a821"/>
<rect x="787.7" y="109.6" width="2.8" height="1.3" fill="#f6a821"/>
<rect x="790.1" y="110.9" width="2.8" height="7.2" fill="#f6a821"/>
<rect x="793.1" y="117.3" width="1.6" height="1.0" fill="#fcdc9c" stroke="#f6a821" stroke-width="1.1"/>
<rect x="794.9" y="117.3" width="2.8" height="1.1" fill="#f6a821"/>
<rect x="797.3" y="118.4" width="2.8" height="7.6" fill="#f6a821"/>
<rect x="799.7" y="126.0" width="2.8" height="2.3" fill="#f6a821"/>
<rect x="802.1" y="128.3" width="2.8" height="3.6" fill="#f6a821"/>
<rect x="804.5" y="131.9" width="2.8" height="20.3" fill="#f6a821"/>
<rect x="806.9" y="152.2" width="2.8" height="11.4" fill="#f6a821"/>
<rect x="809.3" y="163.6" width="2.8" height="4.2" fill="#f6a821"/>
<rect x="811.7" y="167.8" width="2.8" height="8.6" fill="#f6a821"/>
<rect x="814.1" y="176.4" width="2.8" height="1.0" fill="#f6a821"/>
<rect x="816.5" y="176.5" width="2.8" height="4.0" fill="#f6a821"/>
<rect x="818.9" y="180.5" width="2.8" height="6.0" fill="#f6a821"/>
<rect x="821.3" y="186.5" width="2.8" height="3.6" fill="#f6a821"/>
<rect x="824.3" y="183.8" width="1.6" height="6.3" fill="#fcdc9c" stroke="#f6a821" stroke-width="1.1"/>
<rect x="826.7" y="182.3" width="1.6" height="1.5" fill="#fcdc9c" stroke="#f6a821" stroke-width="1.1"/>
<rect x="829.1" y="182.1" width="1.6" height="1.0" fill="#fcdc9c" stroke="#f6a821" stroke-width="1.1"/>
<rect x="831.5" y="181.6" width="1.6" height="1.0" fill="#fcdc9c" stroke="#f6a821" stroke-width="1.1"/>
<rect x="833.3" y="181.6" width="2.8" height="3.5" fill="#f6a821"/>
<rect x="836.3" y="183.7" width="1.6" height="1.4" fill="#fcdc9c" stroke="#f6a821" stroke-width="1.1"/>
<rect x="838.1" y="183.7" width="2.8" height="7.1" fill="#f6a821"/>
<rect x="841.1" y="187.7" width="1.6" height="3.1" fill="#fcdc9c" stroke="#f6a821" stroke-width="1.1"/>
<rect x="842.9" y="187.7" width="2.8" height="1.0" fill="#f6a821"/>
<rect x="845.3" y="187.7" width="2.8" height="6.9" fill="#f6a821"/>
<rect x="848.3" y="186.8" width="1.6" height="7.8" fill="#fcdc9c" stroke="#f6a821" stroke-width="1.1"/>
<rect x="850.1" y="186.8" width="2.8" height="5.6" fill="#f6a821"/>
<rect x="853.1" y="192.4" width="1.6" height="1.0" fill="#fcdc9c" stroke="#f6a821" stroke-width="1.1"/>
<rect x="855.5" y="184.5" width="1.6" height="7.9" fill="#fcdc9c" stroke="#f6a821" stroke-width="1.1"/>
<rect x="857.3" y="184.5" width="2.8" height="6.8" fill="#f6a821"/>
<rect x="860.3" y="186.8" width="1.6" height="4.5" fill="#fcdc9c" stroke="#f6a821" stroke-width="1.1"/>
<rect x="862.7" y="179.0" width="1.6" height="7.7" fill="#fcdc9c" stroke="#f6a821" stroke-width="1.1"/>
<rect x="864.5" y="179.0" width="2.8" height="4.6" fill="#f6a821"/>
<rect x="866.9" y="183.7" width="2.8" height="5.8" fill="#f6a821"/>
<rect x="869.3" y="189.4" width="2.8" height="2.5" fill="#f6a821"/>
<rect x="872.3" y="185.4" width="1.6" height="6.5" fill="#fcdc9c" stroke="#f6a821" stroke-width="1.1"/>
<rect x="874.7" y="175.6" width="1.6" height="9.8" fill="#fcdc9c" stroke="#f6a821" stroke-width="1.1"/>
<rect x="877.1" y="171.6" width="1.6" height="4.0" fill="#fcdc9c" stroke="#f6a821" stroke-width="1.1"/>
<rect x="878.9" y="171.6" width="2.8" height="15.3" fill="#f6a821"/>
<rect x="881.3" y="187.0" width="2.8" height="1.0" fill="#f6a821"/>
<rect x="884.3" y="186.9" width="1.6" height="1.0" fill="#fcdc9c" stroke="#f6a821" stroke-width="1.1"/>
<rect x="886.7" y="182.2" width="1.6" height="4.7" fill="#fcdc9c" stroke="#f6a821" stroke-width="1.1"/>
<rect x="889.1" y="173.7" width="1.6" height="8.5" fill="#fcdc9c" stroke="#f6a821" stroke-width="1.1"/>
<rect x="890.9" y="173.7" width="2.8" height="1.9" fill="#f6a821"/>
<rect x="893.3" y="175.6" width="2.8" height="5.1" fill="#f6a821"/>
<rect x="895.7" y="180.7" width="2.8" height="4.4" fill="#f6a821"/>
<rect x="898.1" y="185.1" width="2.8" height="4.8" fill="#f6a821"/>
<g shape-rendering="crispEdges">
<line x1="10" y1="77.5" x2="925" y2="77.5" stroke="#c0272d" stroke-width="1.3"/>
<line x1="10" y1="145.5" x2="925" y2="145.5" stroke="#c0272d" stroke-width="1.3"/>
<line x1="10" y1="154.5" x2="925" y2="154.5" stroke="#c0272d" stroke-width="1.3"/>
<line x1="10" y1="174.5" x2="925" y2="174.5" stroke="#c0272d" stroke-width="1.3"/>
<line x1="10" y1="207.5" x2="925" y2="207.5" stroke="#58a858" stroke-width="1.3"/>
<line x1="10" y1="221.5" x2="925" y2="221.5" stroke="#58a858" stroke-width="1.3"/>
</g>
<rect x="10" y="188.8" width="915" height="0.9" fill="#3f9a3f"/>
<rect x="10" y="187.9" width="915" height="1.25" fill="#040a04"/>
<line x1="816" y1="189.3" x2="900" y2="189.3" stroke="#3fb6c6" stroke-width="1.2" stroke-dasharray="5 4"/>
<line x1="540" y1="193" x2="925" y2="87.8" stroke="#1a2298" stroke-width="1.05"/>
<polyline points="9.5,140.0 11.0,139.5 12.5,138.9 14.0,138.3 15.5,137.7 17.0,137.1 18.5,136.4 20.0,135.7 21.5,135.0 23.0,134.2 24.5,133.4 26.0,132.5 27.5,131.5 29.0,130.3 30.5,129.2 32.0,128.0 33.5,126.9 35.0,126.1 36.5,125.4 38.0,124.9 39.5,124.4 41.0,123.9 42.5,123.5 44.0,123.1 45.5,122.8 47.0,122.4 48.5,122.2 50.0,121.9 51.5,121.7 53.0,121.5 54.5,121.2 56.0,121.0 57.5,120.7 59.0,120.3 60.5,119.8 62.0,119.2 63.5,118.4 65.0,117.3 66.5,115.9 68.0,113.8 69.5,110.5 71.0,107.8 72.5,106.2 74.0,104.7 75.5,102.9 77.0,101.3 78.5,100.2 80.0,99.3 81.5,98.6 83.0,98.2 84.5,98.0 86.0,97.7 87.5,97.6 89.0,97.4 90.5,97.3 92.0,97.2 93.5,97.1 95.0,97.0 96.5,96.8 98.0,96.7 99.5,96.5 101.0,96.4 102.5,96.2 104.0,96.1 105.5,96.0 107.0,95.8 108.5,95.7 110.0,95.5 111.5,95.4 113.0,95.2 114.5,95.0 116.0,94.8 117.5,94.5 119.0,94.2 120.5,93.9 122.0,93.7 123.5,93.5 125.0,93.3 126.5,93.2 128.0,93.2 129.5,93.3 131.0,93.4 132.5,93.7 134.0,94.0 135.5,94.3 137.0,95.3 138.5,97.2 140.0,99.3 141.5,101.2 143.0,102.6 144.5,104.0 146.0,105.2 147.5,106.3 149.0,107.2 150.5,108.0 152.0,108.7 153.5,109.4 155.0,110.1 156.5,110.8 158.0,111.8 159.5,112.8 161.0,113.7 162.5,114.3 164.0,114.6 165.5,114.6 167.0,114.5 168.5,114.5 170.0,114.4 171.5,114.3 173.0,114.1 174.5,114.0 176.0,113.6 177.5,113.0 179.0,112.3 180.5,111.6 182.0,110.9 183.5,110.6 185.0,110.5 186.5,110.6 188.0,110.7 189.5,110.9 191.0,111.2 192.5,111.5 194.0,111.8 195.5,112.1 197.0,112.6 198.5,113.1 200.0,113.8 201.5,114.5 203.0,115.3 204.5,116.1 206.0,116.8 207.5,117.5 209.0,118.3 210.5,119.1 212.0,119.9 213.5,120.7 215.0,121.6 216.5,122.3 218.0,123.1 219.5,123.8 221.0,124.4 222.5,124.9 224.0,125.4 225.5,125.8 227.0,126.1 228.5,126.4 230.0,126.8 231.5,127.2 233.0,127.6 234.5,128.1 236.0,128.7 237.5,129.5 239.0,130.6 240.5,131.9 242.0,133.2 243.5,134.5 245.0,135.7 246.5,137.0 248.0,138.3 249.5,139.6 251.0,141.0 252.5,142.4 254.0,143.8 255.5,145.2 257.0,146.7 258.5,148.2 260.0,149.7 261.5,151.3 263.0,152.8 264.5,154.3 266.0,155.9 267.5,157.5 269.0,159.2 270.5,160.7 272.0,161.9 273.5,163.0 275.0,163.9 276.5,164.7 278.0,165.4 279.5,166.1 281.0,166.7 282.5,167.3 284.0,167.9 285.5,168.4 287.0,168.9 288.5,169.3 290.0,169.7 291.5,170.1 293.0,170.4 294.5,170.8 296.0,171.1 297.5,171.5 299.0,171.8 300.5,172.1 302.0,172.3 303.5,172.4 305.0,172.5 306.5,172.5 308.0,172.5 309.5,172.5 311.0,172.5 312.5,172.5 314.0,172.0 315.5,169.5 317.0,166.8 318.5,165.2 320.0,163.9 321.5,162.7 323.0,161.7 324.5,160.7 326.0,159.9 327.5,159.2 329.0,158.5 330.5,157.9 332.0,157.3 333.5,156.8 335.0,156.4 336.5,156.0 338.0,155.7 339.5,155.5 341.0,155.3 342.5,155.1 344.0,154.9 345.5,154.6 347.0,154.3 348.5,153.9 350.0,153.3 351.5,152.5 353.0,151.7 354.5,150.8 356.0,150.0 357.5,149.4 359.0,148.8 360.5,148.2 362.0,147.6 363.5,147.1 365.0,146.5 366.5,145.8 368.0,145.1 369.5,144.4 371.0,143.5 372.5,142.6 374.0,141.6 375.5,140.6 377.0,139.7 378.5,138.8 380.0,138.0 381.5,137.1 383.0,136.2 384.5,135.4 386.0,134.7 387.5,134.1 389.0,133.6 390.5,133.2 392.0,132.9 393.5,132.8 395.0,132.9 396.5,133.0 398.0,133.2 399.5,133.4 401.0,133.6 402.5,133.8 404.0,134.0 405.5,134.1 407.0,134.2 408.5,134.2 410.0,134.2 411.5,134.3 413.0,134.3 414.5,134.4 416.0,134.4 417.5,134.5 419.0,134.9 420.5,135.9 422.0,137.1 423.5,138.3 425.0,139.3 426.5,139.8 428.0,140.2 429.5,140.5 431.0,140.8 432.5,140.9 434.0,141.0 435.5,140.9 437.0,140.7 438.5,140.4 440.0,140.0 441.5,139.6 443.0,139.2 444.5,138.9 446.0,138.6 447.5,138.2 449.0,137.8 450.5,137.4 452.0,137.0 453.5,136.7 455.0,136.6 456.5,136.5 458.0,136.5 459.5,136.5 461.0,136.6 462.5,136.6 464.0,136.7 465.5,136.8 467.0,136.8 468.5,136.9 470.0,137.0 471.5,137.0 473.0,137.1 474.5,137.2 476.0,137.2 477.5,137.3 479.0,137.4 480.5,137.4 482.0,137.5 483.5,137.6 485.0,137.7 486.5,137.8 488.0,137.9 489.5,138.0 491.0,138.1 492.5,138.3 494.0,138.5 495.5,138.8 497.0,139.1 498.5,139.4 500.0,139.8 501.5,140.2 503.0,140.6 504.5,140.9 506.0,141.2 507.5,141.6 509.0,141.9 510.5,142.3 512.0,142.7 513.5,143.1 515.0,143.7 516.5,144.3 518.0,145.0 519.5,146.1 521.0,147.6 522.5,149.3 524.0,151.0 525.5,152.6 527.0,154.0 528.5,155.5 530.0,156.9 531.5,158.3 533.0,159.7 534.5,160.9 536.0,162.1 537.5,163.1 539.0,164.2 540.5,165.2 542.0,166.1 543.5,167.0 545.0,167.8 546.5,168.5 548.0,169.1 549.5,169.6 551.0,170.1 552.5,170.6 554.0,171.0 555.5,171.4 557.0,171.7 558.5,172.0 560.0,172.2 561.5,172.3 563.0,172.4 564.5,172.5 566.0,172.6 567.5,172.7 569.0,172.7 570.5,172.8 572.0,172.8 573.5,172.8 575.0,172.8 576.5,172.7 578.0,172.6 579.5,172.4 581.0,172.3 582.5,172.1 584.0,171.8 585.5,171.5 587.0,171.2 588.5,170.6 590.0,169.1 591.5,167.1 593.0,165.0 594.5,163.0 596.0,161.4 597.5,160.0 599.0,158.6 600.5,157.2 602.0,155.9 603.5,154.6 605.0,153.3 606.5,152.0 608.0,150.7 609.5,149.4 611.0,148.1 612.5,146.9 614.0,145.8 615.5,144.9 617.0,144.0 618.5,143.3 620.0,142.5 621.5,141.9 623.0,141.3 624.5,140.7 626.0,140.2 627.5,139.7 629.0,139.2 630.5,138.7 632.0,138.3 633.5,138.1 635.0,138.2 636.5,138.5 638.0,138.9 639.5,139.5 641.0,140.1 642.5,140.7 644.0,141.2 645.5,141.8 647.0,142.4 648.5,142.9 650.0,143.5 651.5,144.0 653.0,144.4 654.5,144.9 656.0,145.4 657.5,145.8 659.0,146.2 660.5,146.5 662.0,146.7 663.5,146.7 665.0,146.7 666.5,146.7 668.0,146.7 669.5,146.7 671.0,146.7 672.5,146.6 674.0,146.6 675.5,146.6 677.0,146.6 678.5,146.5 680.0,146.5 681.5,146.4 683.0,146.4 684.5,146.3 686.0,146.0 687.5,144.3 689.0,142.0 690.5,139.5 692.0,137.5 693.5,135.6 695.0,133.8 696.5,131.9 698.0,130.1 699.5,128.2 701.0,126.2 702.5,124.2 704.0,122.2 705.5,120.3 707.0,118.6 708.5,117.2 710.0,115.8 711.5,114.6 713.0,113.5 714.5,112.4 716.0,111.4 717.5,110.5 719.0,109.6 720.5,108.8 722.0,108.0 723.5,107.2 725.0,106.5 726.5,105.9 728.0,105.4 729.5,105.0 731.0,104.6 732.5,104.2 734.0,103.9 735.5,103.6 737.0,103.3 738.5,103.1 740.0,102.8 741.5,102.6 743.0,102.3 744.5,102.2 746.0,102.1 747.5,102.1 749.0,102.3 750.5,102.6 752.0,102.9 753.5,103.3 755.0,103.7 756.5,104.1 758.0,104.5 759.5,104.9 761.0,105.3 762.5,105.7 764.0,106.2 765.5,106.6 767.0,107.0 768.5,107.3 770.0,107.6 771.5,107.9 773.0,108.2 774.5,108.4 776.0,108.7 777.5,108.9 779.0,109.2 780.5,109.4 782.0,109.7 783.5,110.0 785.0,110.3 786.5,110.6 788.0,110.9 789.5,111.3 791.0,111.7 792.5,112.1 794.0,112.6 795.5,113.1 797.0,113.6 798.5,114.3 800.0,115.1 801.5,116.1 803.0,117.7 804.5,119.9 806.0,122.4 807.5,124.9 809.0,127.0 810.5,129.1 812.0,131.3 813.5,133.5 815.0,135.9 816.5,138.5 818.0,141.5 819.5,144.8 821.0,147.8 822.5,150.5 824.0,153.0 825.5,155.3 827.0,157.3 828.5,159.2 830.0,160.9 831.5,162.5 833.0,164.0 834.5,165.4 836.0,166.6 837.5,167.8 839.0,168.8 840.5,169.7 842.0,170.6 843.5,171.5 845.0,172.3 846.5,173.1 848.0,173.8 849.5,174.6 851.0,175.3 852.5,176.0 854.0,176.8 855.5,177.5 857.0,178.3 858.5,179.1 860.0,179.8 861.5,180.6 863.0,181.2 864.5,181.9 866.0,182.7 867.5,183.4 869.0,183.9 870.5,184.1 872.0,183.9 873.5,183.3 875.0,182.6 876.5,182.1 878.0,182.2 879.5,182.4 881.0,182.8 882.5,183.2 884.0,183.4 885.5,183.5 887.0,183.4 888.5,183.1 890.0,182.9 891.5,182.6 893.0,182.5 894.5,182.6 896.0,182.8 897.5,183.2 899.0,183.7" fill="none" stroke="#a90f16" stroke-width="0.95" stroke-linejoin="round"/>
<polyline points="9.5,128.2 11.0,128.4 12.5,128.6 14.0,128.7 15.5,128.8 17.0,128.8 18.5,128.8 20.0,128.6 21.5,128.4 23.0,128.2 24.5,127.9 26.0,127.5 27.5,127.2 29.0,126.9 30.5,126.6 32.0,126.2 33.5,125.8 35.0,125.3 36.5,124.9 38.0,124.4 39.5,124.1 41.0,123.8 42.5,123.6 44.0,123.5 45.5,123.3 47.0,123.2 48.5,123.1 50.0,123.0 51.5,122.9 53.0,122.8 54.5,122.6 56.0,122.5 57.5,122.3 59.0,122.2 60.5,122.0 62.0,121.7 63.5,121.4 65.0,121.0 66.5,120.1 68.0,118.9 69.5,117.6 71.0,116.4 72.5,115.5 74.0,114.7 75.5,114.0 77.0,113.3 78.5,112.6 80.0,112.0 81.5,111.5 83.0,111.0 84.5,110.5 86.0,110.1 87.5,109.7 89.0,109.4 90.5,109.0 92.0,108.7 93.5,108.4 95.0,108.1 96.5,107.8 98.0,107.6 99.5,107.3 101.0,107.0 102.5,106.7 104.0,106.4 105.5,106.1 107.0,105.8 108.5,105.6 110.0,105.3 111.5,105.0 113.0,104.8 114.5,104.5 116.0,104.2 117.5,103.9 119.0,103.6 120.5,103.3 122.0,103.0 123.5,102.8 125.0,102.5 126.5,102.4 128.0,102.2 129.5,102.1 131.0,102.0 132.5,102.0 134.0,101.9 135.5,101.9 137.0,102.1 138.5,102.6 140.0,103.3 141.5,104.1 143.0,104.8 144.5,105.3 146.0,105.7 147.5,106.2 149.0,106.6 150.5,107.0 152.0,107.4 153.5,107.7 155.0,108.1 156.5,108.5 158.0,108.9 159.5,109.3 161.0,109.6 162.5,109.8 164.0,109.9 165.5,109.9 167.0,110.0 168.5,110.0 170.0,110.0 171.5,110.0 173.0,110.1 174.5,110.1 176.0,110.1 177.5,110.1 179.0,110.1 180.5,110.1 182.0,110.1 183.5,110.1 185.0,110.1 186.5,110.0 188.0,110.0 189.5,110.0 191.0,109.9 192.5,109.9 194.0,109.9 195.5,109.9 197.0,110.0 198.5,110.1 200.0,110.3 201.5,110.6 203.0,110.9 204.5,111.3 206.0,111.7 207.5,112.1 209.0,112.6 210.5,113.0 212.0,113.5 213.5,113.9 215.0,114.3 216.5,114.7 218.0,115.1 219.5,115.5 221.0,115.9 222.5,116.4 224.0,116.8 225.5,117.3 227.0,117.7 228.5,118.2 230.0,118.7 231.5,119.1 233.0,119.6 234.5,120.1 236.0,120.6 237.5,121.0 239.0,121.5 240.5,121.9 242.0,122.4 243.5,122.8 245.0,123.4 246.5,123.9 248.0,124.6 249.5,125.4 251.0,126.4 252.5,127.5 254.0,128.7 255.5,130.0 257.0,131.2 258.5,132.5 260.0,133.6 261.5,134.6 263.0,135.6 264.5,136.6 266.0,137.6 267.5,138.6 269.0,139.6 270.5,140.5 272.0,141.4 273.5,142.3 275.0,143.1 276.5,143.9 278.0,144.7 279.5,145.4 281.0,146.1 282.5,146.8 284.0,147.5 285.5,148.1 287.0,148.8 288.5,149.4 290.0,150.0 291.5,150.6 293.0,151.1 294.5,151.7 296.0,152.3 297.5,152.8 299.0,153.4 300.5,153.9 302.0,154.3 303.5,154.7 305.0,155.1 306.5,155.4 308.0,155.7 309.5,156.0 311.0,156.2 312.5,156.2 314.0,156.1 315.5,156.0 317.0,155.8 318.5,155.6 320.0,155.3 321.5,155.1 323.0,154.8 324.5,154.6 326.0,154.4 327.5,154.3 329.0,154.1 330.5,154.0 332.0,153.8 333.5,153.7 335.0,153.6 336.5,153.5 338.0,153.5 339.5,153.5 341.0,153.5 342.5,153.5 344.0,153.5 345.5,153.5 347.0,153.5 348.5,153.5 350.0,153.5 351.5,153.3 353.0,153.0 354.5,152.4 356.0,151.7 357.5,151.0 359.0,150.3 360.5,149.6 362.0,149.1 363.5,148.6 365.0,148.2 366.5,147.8 368.0,147.4 369.5,147.1 371.0,146.7 372.5,146.3 374.0,146.0 375.5,145.7 377.0,145.3 378.5,145.0 380.0,144.7 381.5,144.3 383.0,144.0 384.5,143.6 386.0,143.3 387.5,142.9 389.0,142.6 390.5,142.3 392.0,142.0 393.5,141.7 395.0,141.5 396.5,141.3 398.0,141.1 399.5,140.9 401.0,140.7 402.5,140.6 404.0,140.4 405.5,140.2 407.0,140.1 408.5,139.9 410.0,139.8 411.5,139.7 413.0,139.6 414.5,139.6 416.0,139.6 417.5,139.7 419.0,140.0 420.5,140.3 422.0,140.7 423.5,141.0 425.0,141.3 426.5,141.5 428.0,141.6 429.5,141.6 431.0,141.5 432.5,141.4 434.0,141.3 435.5,141.1 437.0,140.9 438.5,140.8 440.0,140.6 441.5,140.4 443.0,140.2 444.5,139.9 446.0,139.6 447.5,139.3 449.0,139.0 450.5,138.7 452.0,138.5 453.5,138.3 455.0,138.1 456.5,138.1 458.0,138.1 459.5,138.1 461.0,138.1 462.5,138.1 464.0,138.1 465.5,138.1 467.0,138.1 468.5,138.1 470.0,138.1 471.5,138.1 473.0,138.1 474.5,138.1 476.0,138.1 477.5,138.1 479.0,138.1 480.5,138.1 482.0,138.1 483.5,138.2 485.0,138.2 486.5,138.2 488.0,138.3 489.5,138.3 491.0,138.4 492.5,138.4 494.0,138.5 495.5,138.5 497.0,138.6 498.5,138.7 500.0,138.8 501.5,138.9 503.0,139.1 504.5,139.3 506.0,139.4 507.5,139.6 509.0,139.8 510.5,140.1 512.0,140.3 513.5,140.6 515.0,141.0 516.5,141.3 518.0,141.8 519.5,142.3 521.0,143.1 522.5,143.9 524.0,144.7 525.5,145.6 527.0,146.4 528.5,147.1 530.0,147.7 531.5,148.4 533.0,149.0 534.5,149.6 536.0,150.2 537.5,150.8 539.0,151.4 540.5,152.0 542.0,152.6 543.5,153.2 545.0,153.8 546.5,154.4 548.0,155.0 549.5,155.6 551.0,156.1 552.5,156.6 554.0,157.1 555.5,157.6 557.0,158.0 558.5,158.5 560.0,158.9 561.5,159.3 563.0,159.7 564.5,160.0 566.0,160.4 567.5,160.7 569.0,161.1 570.5,161.4 572.0,161.7 573.5,161.9 575.0,162.1 576.5,162.3 578.0,162.4 579.5,162.5 581.0,162.6 582.5,162.7 584.0,162.8 585.5,162.9 587.0,162.9 588.5,163.0 590.0,163.0 591.5,163.0 593.0,162.7 594.5,162.1 596.0,161.2 597.5,160.3 599.0,159.3 600.5,158.4 602.0,157.7 603.5,157.1 605.0,156.5 606.5,155.9 608.0,155.4 609.5,154.9 611.0,154.4 612.5,153.9 614.0,153.4 615.5,152.9 617.0,152.4 618.5,151.8 620.0,151.3 621.5,150.7 623.0,150.1 624.5,149.5 626.0,148.9 627.5,148.4 629.0,147.9 630.5,147.5 632.0,147.1 633.5,146.9 635.0,146.7 636.5,146.7 638.0,146.7 639.5,146.7 641.0,146.8 642.5,146.8 644.0,146.9 645.5,147.0 647.0,147.0 648.5,147.1 650.0,147.2 651.5,147.2 653.0,147.3 654.5,147.3 656.0,147.3 657.5,147.3 659.0,147.3 660.5,147.3 662.0,147.3 663.5,147.3 665.0,147.3 666.5,147.3 668.0,147.3 669.5,147.3 671.0,147.3 672.5,147.3 674.0,147.3 675.5,147.3 677.0,147.3 678.5,147.3 680.0,147.3 681.5,147.3 683.0,147.3 684.5,147.3 686.0,147.2 687.5,146.4 689.0,145.3 690.5,144.1 692.0,143.0 693.5,142.1 695.0,141.0 696.5,140.0 698.0,139.0 699.5,137.9 701.0,136.9 702.5,135.9 704.0,135.0 705.5,134.1 707.0,133.1 708.5,132.2 710.0,131.3 711.5,130.5 713.0,129.6 714.5,128.8 716.0,128.1 717.5,127.4 719.0,126.7 720.5,126.1 722.0,125.4 723.5,124.8 725.0,124.2 726.5,123.7 728.0,123.1 729.5,122.5 731.0,122.0 732.5,121.4 734.0,120.9 735.5,120.4 737.0,119.9 738.5,119.4 740.0,119.0 741.5,118.7 743.0,118.4 744.5,118.0 746.0,117.7 747.5,117.4 749.0,117.1 750.5,116.9 752.0,116.6 753.5,116.4 755.0,116.2 756.5,116.0 758.0,115.8 759.5,115.6 761.0,115.4 762.5,115.2 764.0,115.1 765.5,114.9 767.0,114.8 768.5,114.7 770.0,114.6 771.5,114.5 773.0,114.5 774.5,114.5 776.0,114.5 777.5,114.5 779.0,114.5 780.5,114.5 782.0,114.5 783.5,114.5 785.0,114.5 786.5,114.5 788.0,114.5 789.5,114.5 791.0,114.5 792.5,114.6 794.0,114.8 795.5,114.9 797.0,115.2 798.5,115.4 800.0,115.7 801.5,116.0 803.0,116.6 804.5,117.6 806.0,118.9 807.5,120.2 809.0,121.6 810.5,122.9 812.0,124.2 813.5,125.6 815.0,127.1 816.5,128.5 818.0,130.0 819.5,131.4 821.0,132.7 822.5,133.8 824.0,134.9 825.5,136.0 827.0,137.0 828.5,138.0 830.0,138.9 831.5,139.9 833.0,140.9 834.5,141.8 836.0,142.8 837.5,143.8 839.0,144.7 840.5,145.7 842.0,146.6 843.5,147.6 845.0,148.5 846.5,149.4 848.0,150.3 849.5,151.1 851.0,152.0 852.5,152.8 854.0,153.6 855.5,154.4 857.0,155.2 858.5,156.1 860.0,156.9 861.5,157.7 863.0,158.7 864.5,159.7 866.0,160.6 867.5,161.3 869.0,161.7 870.5,162.0 872.0,162.1 873.5,162.3 875.0,162.4 876.5,162.6 878.0,163.0 879.5,163.4 881.0,164.0 882.5,164.7 884.0,165.3 885.5,165.9 887.0,166.4 888.5,166.8 890.0,167.1 891.5,167.5 893.0,167.8 894.5,168.1 896.0,168.3 897.5,168.6 899.0,168.8 899.4,168.8" fill="none" stroke="#0808c8" stroke-width="2.0" stroke-linejoin="round"/>
<g fill="#c4282e" shape-rendering="crispEdges">
<rect x="11" y="282" width="1" height="1"/>
<rect x="13" y="282" width="1" height="1"/>
<rect x="16" y="281" width="1" height="2"/>
<rect x="18" y="279" width="1" height="4"/>
<rect x="21" y="279" width="1" height="4"/>
<rect x="23" y="281" width="1" height="2"/>
<rect x="25" y="281" width="1" height="2"/>
<rect x="28" y="280" width="1" height="3"/>
<rect x="30" y="280" width="1" height="3"/>
<rect x="33" y="279" width="1" height="4"/>
<rect x="35" y="280" width="1" height="3"/>
<rect x="37" y="281" width="1" height="2"/>
<rect x="40" y="282" width="1" height="1"/>
<rect x="42" y="282" width="1" height="1"/>
<rect x="45" y="282" width="1" height="1"/>
<rect x="47" y="282" width="1" height="1"/>
<rect x="49" y="282" width="1" height="1"/>
<rect x="52" y="282" width="1" height="1"/>
<rect x="54" y="282" width="1" height="1"/>
<rect x="57" y="282" width="1" height="1"/>
<rect x="59" y="282" width="1" height="1"/>
<rect x="61" y="282" width="1" height="1"/>
<rect x="64" y="282" width="1" height="1"/>
<rect x="66" y="280" width="1" height="3"/>
<rect x="69" y="277" width="1" height="6"/>
<rect x="71" y="275" width="1" height="8"/>
<rect x="73" y="277" width="1" height="6"/>
<rect x="76" y="282" width="1" height="1"/>
<rect x="78" y="282" width="1" height="1"/>
<rect x="81" y="282" width="1" height="1"/>
<rect x="83" y="282" width="1" height="1"/>
<rect x="85" y="282" width="1" height="1"/>
<rect x="88" y="282" width="1" height="2"/>
<rect x="90" y="282" width="1" height="3"/>
<rect x="93" y="282" width="1" height="2"/>
<rect x="95" y="282" width="1" height="3"/>
<rect x="97" y="282" width="1" height="2"/>
<rect x="100" y="282" width="1" height="1"/>
<rect x="102" y="282" width="1" height="1"/>
<rect x="105" y="282" width="1" height="1"/>
<rect x="107" y="282" width="1" height="1"/>
<rect x="109" y="282" width="1" height="1"/>
<rect x="112" y="282" width="1" height="1"/>
<rect x="114" y="282" width="1" height="1"/>
<rect x="117" y="282" width="1" height="1"/>
<rect x="119" y="282" width="1" height="1"/>
<rect x="121" y="282" width="1" height="1"/>
<rect x="124" y="282" width="1" height="1"/>
<rect x="126" y="282" width="1" height="1"/>
<rect x="129" y="282" width="1" height="1"/>
<rect x="131" y="282" width="1" height="1"/>
<rect x="133" y="282" width="1" height="2"/>
<rect x="136" y="282" width="1" height="3"/>
<rect x="138" y="282" width="1" height="5"/>
<rect x="141" y="282" width="1" height="6"/>
<rect x="143" y="282" width="1" height="7"/>
<rect x="145" y="282" width="1" height="5"/>
<rect x="148" y="282" width="1" height="5"/>
<rect x="150" y="282" width="1" height="2"/>
<rect x="153" y="282" width="1" height="1"/>
<rect x="155" y="282" width="1" height="1"/>
<rect x="157" y="282" width="1" height="1"/>
<rect x="160" y="282" width="1" height="1"/>
<rect x="162" y="282" width="1" height="1"/>
<rect x="165" y="281" width="1" height="2"/>
<rect x="167" y="281" width="1" height="2"/>
<rect x="169" y="281" width="1" height="2"/>
<rect x="172" y="282" width="1" height="1"/>
<rect x="174" y="281" width="1" height="2"/>
<rect x="177" y="280" width="1" height="3"/>
<rect x="179" y="280" width="1" height="3"/>
<rect x="181" y="280" width="1" height="3"/>
<rect x="184" y="281" width="1" height="2"/>
<rect x="186" y="282" width="1" height="1"/>
<rect x="189" y="282" width="1" height="1"/>
<rect x="191" y="282" width="1" height="1"/>
<rect x="193" y="282" width="1" height="1"/>
<rect x="196" y="282" width="1" height="1"/>
<rect x="198" y="282" width="1" height="1"/>
<rect x="201" y="282" width="1" height="1"/>
<rect x="203" y="282" width="1" height="1"/>
<rect x="205" y="282" width="1" height="1"/>
<rect x="208" y="282" width="1" height="1"/>
<rect x="210" y="282" width="1" height="2"/>
<rect x="213" y="282" width="1" height="1"/>
<rect x="215" y="282" width="1" height="2"/>
<rect x="217" y="282" width="1" height="2"/>
<rect x="220" y="282" width="1" height="1"/>
<rect x="222" y="282" width="1" height="1"/>
<rect x="225" y="282" width="1" height="1"/>
<rect x="227" y="282" width="1" height="1"/>
<rect x="229" y="282" width="1" height="1"/>
<rect x="232" y="282" width="1" height="1"/>
<rect x="234" y="282" width="1" height="1"/>
<rect x="237" y="282" width="1" height="1"/>
<rect x="239" y="282" width="1" height="1"/>
<rect x="241" y="282" width="1" height="1"/>
<rect x="244" y="282" width="1" height="3"/>
<rect x="246" y="282" width="1" height="3"/>
<rect x="249" y="282" width="1" height="3"/>
<rect x="251" y="282" width="1" height="3"/>
<rect x="253" y="282" width="1" height="3"/>
<rect x="256" y="282" width="1" height="3"/>
<rect x="258" y="282" width="1" height="3"/>
<rect x="261" y="282" width="1" height="2"/>
<rect x="263" y="282" width="1" height="2"/>
<rect x="265" y="282" width="1" height="2"/>
<rect x="268" y="282" width="1" height="1"/>
<rect x="270" y="282" width="1" height="1"/>
<rect x="273" y="282" width="1" height="1"/>
<rect x="275" y="282" width="1" height="1"/>
<rect x="277" y="282" width="1" height="1"/>
<rect x="280" y="281" width="1" height="2"/>
<rect x="282" y="281" width="1" height="2"/>
<rect x="285" y="281" width="1" height="2"/>
<rect x="287" y="280" width="1" height="3"/>
<rect x="289" y="280" width="1" height="3"/>
<rect x="292" y="280" width="1" height="3"/>
<rect x="294" y="280" width="1" height="3"/>
<rect x="297" y="281" width="1" height="2"/>
<rect x="299" y="282" width="1" height="1"/>
<rect x="301" y="282" width="1" height="1"/>
<rect x="304" y="281" width="1" height="2"/>
<rect x="306" y="282" width="1" height="1"/>
<rect x="309" y="282" width="1" height="1"/>
<rect x="311" y="282" width="1" height="1"/>
<rect x="313" y="280" width="1" height="3"/>
<rect x="316" y="276" width="1" height="7"/>
<rect x="318" y="277" width="1" height="6"/>
<rect x="321" y="278" width="1" height="5"/>
<rect x="323" y="279" width="1" height="4"/>
<rect x="325" y="280" width="1" height="3"/>
<rect x="328" y="281" width="1" height="2"/>
<rect x="330" y="282" width="1" height="1"/>
<rect x="333" y="282" width="1" height="1"/>
<rect x="335" y="282" width="1" height="2"/>
<rect x="337" y="282" width="1" height="2"/>
<rect x="340" y="282" width="1" height="2"/>
<rect x="342" y="282" width="1" height="1"/>
<rect x="345" y="282" width="1" height="1"/>
<rect x="347" y="282" width="1" height="1"/>
<rect x="349" y="282" width="1" height="1"/>
<rect x="352" y="282" width="1" height="1"/>
<rect x="354" y="281" width="1" height="2"/>
<rect x="357" y="281" width="1" height="2"/>
<rect x="359" y="281" width="1" height="2"/>
<rect x="361" y="282" width="1" height="1"/>
<rect x="364" y="282" width="1" height="1"/>
<rect x="366" y="282" width="1" height="1"/>
<rect x="369" y="282" width="1" height="1"/>
<rect x="371" y="282" width="1" height="1"/>
<rect x="373" y="282" width="1" height="1"/>
<rect x="376" y="282" width="1" height="1"/>
<rect x="378" y="282" width="1" height="1"/>
<rect x="381" y="282" width="1" height="1"/>
<rect x="383" y="282" width="1" height="1"/>
<rect x="385" y="282" width="1" height="1"/>
<rect x="388" y="282" width="1" height="1"/>
<rect x="390" y="282" width="1" height="2"/>
<rect x="393" y="282" width="1" height="2"/>
<rect x="395" y="282" width="1" height="2"/>
<rect x="397" y="282" width="1" height="3"/>
<rect x="400" y="282" width="1" height="3"/>
<rect x="402" y="282" width="1" height="2"/>
<rect x="405" y="282" width="1" height="1"/>
<rect x="407" y="282" width="1" height="1"/>
<rect x="409" y="282" width="1" height="1"/>
<rect x="412" y="282" width="1" height="1"/>
<rect x="414" y="282" width="1" height="1"/>
<rect x="417" y="282" width="1" height="1"/>
<rect x="419" y="282" width="1" height="2"/>
<rect x="421" y="282" width="1" height="2"/>
<rect x="424" y="282" width="1" height="2"/>
<rect x="426" y="282" width="1" height="3"/>
<rect x="429" y="282" width="1" height="2"/>
<rect x="431" y="282" width="1" height="1"/>
<rect x="433" y="282" width="1" height="1"/>
<rect x="436" y="281" width="1" height="2"/>
<rect x="438" y="282" width="1" height="1"/>
<rect x="441" y="282" width="1" height="1"/>
<rect x="443" y="282" width="1" height="1"/>
<rect x="445" y="282" width="1" height="1"/>
<rect x="448" y="282" width="1" height="1"/>
<rect x="450" y="282" width="1" height="1"/>
<rect x="453" y="282" width="1" height="1"/>
<rect x="455" y="282" width="1" height="1"/>
<rect x="457" y="282" width="1" height="1"/>
<rect x="460" y="282" width="1" height="1"/>
<rect x="462" y="282" width="1" height="1"/>
<rect x="465" y="282" width="1" height="1"/>
<rect x="467" y="282" width="1" height="1"/>
<rect x="469" y="282" width="1" height="1"/>
<rect x="472" y="282" width="1" height="1"/>
<rect x="474" y="282" width="1" height="1"/>
<rect x="477" y="282" width="1" height="1"/>
<rect x="479" y="282" width="1" height="1"/>
<rect x="481" y="282" width="1" height="1"/>
<rect x="484" y="282" width="1" height="1"/>
<rect x="486" y="282" width="1" height="1"/>
<rect x="489" y="282" width="1" height="1"/>
<rect x="491" y="282" width="1" height="1"/>
<rect x="493" y="282" width="1" height="1"/>
<rect x="496" y="282" width="1" height="1"/>
<rect x="498" y="282" width="1" height="1"/>
<rect x="501" y="282" width="1" height="1"/>
<rect x="503" y="282" width="1" height="1"/>
<rect x="505" y="282" width="1" height="1"/>
<rect x="508" y="282" width="1" height="1"/>
<rect x="510" y="282" width="1" height="1"/>
<rect x="513" y="282" width="1" height="1"/>
<rect x="515" y="282" width="1" height="1"/>
<rect x="517" y="282" width="1" height="1"/>
<rect x="520" y="282" width="1" height="3"/>
<rect x="522" y="282" width="1" height="4"/>
<rect x="525" y="282" width="1" height="5"/>
<rect x="527" y="282" width="1" height="3"/>
<rect x="529" y="282" width="1" height="2"/>
<rect x="532" y="282" width="1" height="1"/>
<rect x="534" y="282" width="1" height="1"/>
<rect x="537" y="282" width="1" height="1"/>
<rect x="539" y="282" width="1" height="1"/>
<rect x="541" y="282" width="1" height="1"/>
<rect x="544" y="282" width="1" height="1"/>
<rect x="546" y="282" width="1" height="1"/>
<rect x="549" y="282" width="1" height="1"/>
<rect x="551" y="281" width="1" height="2"/>
<rect x="553" y="281" width="1" height="2"/>
<rect x="556" y="281" width="1" height="2"/>
<rect x="558" y="282" width="1" height="1"/>
<rect x="561" y="282" width="1" height="1"/>
<rect x="563" y="282" width="1" height="1"/>
<rect x="565" y="282" width="1" height="1"/>
<rect x="568" y="282" width="1" height="1"/>
<rect x="570" y="282" width="1" height="1"/>
<rect x="573" y="282" width="1" height="1"/>
<rect x="575" y="282" width="1" height="1"/>
<rect x="577" y="282" width="1" height="1"/>
<rect x="580" y="282" width="1" height="1"/>
<rect x="582" y="282" width="1" height="1"/>
<rect x="585" y="282" width="1" height="1"/>
<rect x="587" y="282" width="1" height="1"/>
<rect x="589" y="281" width="1" height="2"/>
<rect x="592" y="278" width="1" height="5"/>
<rect x="594" y="276" width="1" height="7"/>
<rect x="597" y="276" width="1" height="7"/>
<rect x="599" y="277" width="1" height="6"/>
<rect x="601" y="278" width="1" height="5"/>
<rect x="604" y="280" width="1" height="3"/>
<rect x="606" y="282" width="1" height="1"/>
<rect x="609" y="282" width="1" height="1"/>
<rect x="611" y="282" width="1" height="1"/>
<rect x="613" y="282" width="1" height="1"/>
<rect x="616" y="282" width="1" height="1"/>
<rect x="618" y="282" width="1" height="1"/>
<rect x="621" y="282" width="1" height="2"/>
<rect x="623" y="282" width="1" height="2"/>
<rect x="625" y="282" width="1" height="2"/>
<rect x="628" y="282" width="1" height="2"/>
<rect x="630" y="282" width="1" height="1"/>
<rect x="633" y="282" width="1" height="1"/>
<rect x="635" y="282" width="1" height="2"/>
<rect x="637" y="282" width="1" height="3"/>
<rect x="640" y="282" width="1" height="3"/>
<rect x="642" y="282" width="1" height="3"/>
<rect x="645" y="282" width="1" height="3"/>
<rect x="647" y="282" width="1" height="3"/>
<rect x="649" y="282" width="1" height="3"/>
<rect x="652" y="282" width="1" height="1"/>
<rect x="654" y="282" width="1" height="1"/>
<rect x="657" y="282" width="1" height="1"/>
<rect x="659" y="282" width="1" height="1"/>
<rect x="661" y="282" width="1" height="1"/>
<rect x="664" y="282" width="1" height="1"/>
<rect x="666" y="282" width="1" height="1"/>
<rect x="669" y="282" width="1" height="1"/>
<rect x="671" y="282" width="1" height="1"/>
<rect x="673" y="282" width="1" height="1"/>
<rect x="676" y="282" width="1" height="1"/>
<rect x="678" y="282" width="1" height="1"/>
<rect x="681" y="282" width="1" height="1"/>
<rect x="683" y="282" width="1" height="1"/>
<rect x="685" y="279" width="1" height="4"/>
<rect x="688" y="277" width="1" height="6"/>
<rect x="690" y="277" width="1" height="6"/>
<rect x="693" y="276" width="1" height="7"/>
<rect x="695" y="277" width="1" height="6"/>
<rect x="697" y="278" width="1" height="5"/>
<rect x="700" y="278" width="1" height="5"/>
<rect x="702" y="277" width="1" height="6"/>
<rect x="705" y="279" width="1" height="4"/>
<rect x="707" y="282" width="1" height="1"/>
<rect x="709" y="282" width="1" height="1"/>
<rect x="712" y="282" width="1" height="1"/>
<rect x="714" y="282" width="1" height="1"/>
<rect x="717" y="282" width="1" height="2"/>
<rect x="719" y="282" width="1" height="2"/>
<rect x="721" y="282" width="1" height="2"/>
<rect x="724" y="282" width="1" height="1"/>
<rect x="726" y="282" width="1" height="1"/>
<rect x="729" y="282" width="1" height="1"/>
<rect x="731" y="282" width="1" height="1"/>
<rect x="733" y="282" width="1" height="1"/>
<rect x="736" y="282" width="1" height="2"/>
<rect x="738" y="282" width="1" height="3"/>
<rect x="741" y="282" width="1" height="2"/>
<rect x="743" y="282" width="1" height="1"/>
<rect x="745" y="282" width="1" height="1"/>
<rect x="748" y="282" width="1" height="2"/>
<rect x="750" y="282" width="1" height="2"/>
<rect x="753" y="282" width="1" height="2"/>
<rect x="755" y="282" width="1" height="3"/>
<rect x="757" y="282" width="1" height="4"/>
<rect x="760" y="282" width="1" height="2"/>
<rect x="762" y="282" width="1" height="1"/>
<rect x="765" y="282" width="1" height="1"/>
<rect x="767" y="282" width="1" height="1"/>
<rect x="769" y="282" width="1" height="1"/>
<rect x="772" y="282" width="1" height="1"/>
<rect x="774" y="282" width="1" height="1"/>
<rect x="777" y="282" width="1" height="1"/>
<rect x="779" y="282" width="1" height="1"/>
<rect x="781" y="282" width="1" height="1"/>
<rect x="784" y="282" width="1" height="1"/>
<rect x="786" y="282" width="1" height="1"/>
<rect x="789" y="282" width="1" height="1"/>
<rect x="791" y="282" width="1" height="1"/>
<rect x="793" y="282" width="1" height="1"/>
<rect x="796" y="282" width="1" height="2"/>
<rect x="798" y="282" width="1" height="3"/>
<rect x="801" y="282" width="1" height="4"/>
<rect x="803" y="282" width="1" height="5"/>
<rect x="805" y="282" width="1" height="5"/>
<rect x="808" y="282" width="1" height="6"/>
<rect x="810" y="282" width="1" height="5"/>
<rect x="813" y="282" width="1" height="5"/>
<rect x="815" y="282" width="1" height="4"/>
<rect x="817" y="282" width="1" height="4"/>
<rect x="820" y="282" width="1" height="4"/>
<rect x="822" y="282" width="1" height="3"/>
<rect x="825" y="282" width="1" height="2"/>
<rect x="827" y="282" width="1" height="1"/>
<rect x="829" y="282" width="1" height="1"/>
<rect x="832" y="282" width="1" height="1"/>
<rect x="834" y="282" width="1" height="1"/>
<rect x="837" y="282" width="1" height="1"/>
<rect x="839" y="282" width="1" height="1"/>
<rect x="841" y="282" width="1" height="1"/>
<rect x="844" y="282" width="1" height="1"/>
<rect x="846" y="282" width="1" height="1"/>
<rect x="849" y="282" width="1" height="1"/>
<rect x="851" y="282" width="1" height="1"/>
<rect x="853" y="281" width="1" height="2"/>
<rect x="856" y="281" width="1" height="2"/>
<rect x="858" y="282" width="1" height="1"/>
<rect x="861" y="282" width="1" height="1"/>
<rect x="863" y="280" width="1" height="3"/>
<rect x="865" y="281" width="1" height="2"/>
<rect x="868" y="282" width="1" height="1"/>
<rect x="870" y="282" width="1" height="1"/>
<rect x="873" y="280" width="1" height="3"/>
<rect x="875" y="277" width="1" height="6"/>
<rect x="877" y="278" width="1" height="5"/>
<rect x="880" y="281" width="1" height="2"/>
<rect x="882" y="282" width="1" height="1"/>
<rect x="885" y="282" width="1" height="1"/>
<rect x="887" y="282" width="1" height="1"/>
<rect x="889" y="282" width="1" height="1"/>
<rect x="892" y="280" width="1" height="3"/>
<rect x="894" y="281" width="1" height="2"/>
<rect x="897" y="282" width="1" height="1"/>
<rect x="899" y="282" width="1" height="1"/>
</g>
<polyline points="9.5,286.1 16.2,284.1 20.3,280.0 25.4,279.4 32.5,274.9 37.6,274.9 42.7,274.3 47.8,278.0 56.0,277.4 64.1,277.8 68.2,270.2 71.3,264.7 74.3,265.1 77.4,268.2 84.5,270.2 90.6,275.3 96.7,279.0 102.9,279.0 111.0,278.4 119.2,278.4 127.3,278.0 133.4,280.4 138.5,286.5 143.6,293.1 147.7,294.7 151.8,292.3 160.0,291.6 166.1,289.0 172.2,287.6 178.3,282.5 182.4,281.0 188.5,282.5 195.0,284.1 203.2,287.6 211.3,290.2 217.4,292.0 223.5,290.6 230.7,291.6 237.8,289.0 243.9,293.7 250.0,297.8 256.2,301.2 260.2,302.4 270.4,301.2 278.6,298.8 286.7,294.7 294.9,291.0 299.0,292.3 304.1,289.6 311.2,289.6 314.3,284.5 317.3,277.4 322.4,274.9 327.5,273.9 331.6,276.8 337.7,280.0 345.9,280.0 350.0,279.4 354.0,275.9 360.1,274.7 368.3,274.7 378.5,272.9 386.6,273.3 393.2,275.3 399.3,278.4 405.4,280.4 415.6,281.4 421.7,286.1 426.8,289.2 430.9,288.6 436.0,283.5 446.2,281.4 456.4,279.4 464.5,280.8 472.7,283.5 480.8,283.5 495.1,283.9 503.2,284.5 509.4,287.2 517.5,287.6 520.6,292.7 524.7,297.1 528.7,297.8 535.9,296.3 546.1,295.7 552.2,291.6 564.4,289.0 574.6,285.5 587.2,285.5 591.3,278.4 595.4,271.3 599.5,268.2 603.5,268.2 609.7,270.2 617.8,270.6 626.0,274.3 633.1,273.3 638.2,278.4 644.3,283.5 650.4,286.1 656.5,284.5 664.7,284.5 670.8,283.5 676.9,283.9 684.1,282.5 688.1,274.3 693.2,269.2 698.3,267.2 702.4,263.5 706.5,263.5 713.6,266.6 721.8,269.8 730.0,269.2 738.1,275.3 744.2,275.9 752.4,279.0 758.5,284.1 764.6,282.9 775.2,285.1 789.5,284.1 795.6,287.6 801.7,289.6 807.8,300.8 813.9,304.9 818.0,309.0 824.1,310.0 828.2,306.9 834.3,303.9 842.5,302.9 850.6,299.8 855.7,296.3 859.8,297.8 863.9,293.7 866.9,295.3 872.0,294.3 876.1,286.5 879.2,288.2 887.3,288.6 892.4,285.5 899.6,287.6" fill="none" stroke="#0a0a8c" stroke-width="1.15" stroke-linejoin="round"/>
<polyline points="9.5,286.5 11.0,286.5 12.5,286.3 14.0,286.1 15.5,285.9 17.0,285.5 18.5,284.9 20.0,283.9 21.5,282.6 23.0,281.6 24.5,280.9 26.0,280.3 27.5,279.7 29.0,279.2 30.5,278.7 32.0,278.2 33.5,277.6 35.0,276.9 36.5,276.2 38.0,275.6 39.5,275.2 41.0,274.9 42.5,275.0 44.0,275.4 45.5,276.0 47.0,276.6 48.5,276.9 50.0,277.2 51.5,277.4 53.0,277.6 54.5,277.8 56.0,277.8 57.5,277.8 59.0,277.8 60.5,277.8 62.0,277.8 63.5,277.8 65.0,277.6 66.5,276.4 68.0,274.6 69.5,272.9 71.0,271.6 72.5,270.3 74.0,269.1 75.5,268.3 77.0,268.2 78.5,268.2 80.0,268.2 81.5,268.2 83.0,268.2 84.5,268.9 86.0,269.9 87.5,271.1 89.0,272.2 90.5,273.2 92.0,274.3 93.5,275.3 95.0,276.0 96.5,276.7 98.0,277.4 99.5,277.9 101.0,278.0 102.5,278.0 104.0,278.0 105.5,278.0 107.0,278.0 108.5,278.0 110.0,278.0 111.5,278.0 113.0,278.0 114.5,278.0 116.0,278.0 117.5,278.0 119.0,278.0 120.5,278.0 122.0,278.0 123.5,278.0 125.0,278.0 126.5,278.0 128.0,278.0 129.5,278.2 131.0,278.6 132.5,279.1 134.0,279.6 135.5,280.4 137.0,281.5 138.5,282.6 140.0,283.8 141.5,285.4 143.0,287.2 144.5,288.8 146.0,289.7 147.5,290.5 149.0,291.1 150.5,291.5 152.0,291.6 153.5,291.6 155.0,291.6 156.5,291.6 158.0,291.6 159.5,291.6 161.0,291.6 162.5,291.6 164.0,291.4 165.5,291.1 167.0,290.7 168.5,290.1 170.0,289.6 171.5,289.0 173.0,288.3 174.5,287.5 176.0,286.7 177.5,285.7 179.0,284.6 180.5,283.6 182.0,283.0 183.5,282.8 185.0,282.7 186.5,282.6 188.0,282.5 189.5,282.5 191.0,282.5 192.5,282.8 194.0,283.2 195.5,283.6 197.0,284.1 198.5,284.7 200.0,285.3 201.5,285.9 203.0,286.4 204.5,286.9 206.0,287.5 207.5,288.0 209.0,288.5 210.5,289.0 212.0,289.4 213.5,289.6 215.0,289.8 216.5,290.1 218.0,290.2 219.5,290.4 221.0,290.5 222.5,290.6 224.0,290.6 225.5,290.6 227.0,290.5 228.5,290.5 230.0,290.4 231.5,290.3 233.0,290.3 234.5,290.2 236.0,290.2 237.5,290.3 239.0,290.5 240.5,290.8 242.0,291.1 243.5,291.5 245.0,292.0 246.5,292.8 248.0,293.9 249.5,295.0 251.0,296.0 252.5,296.9 254.0,297.8 255.5,298.7 257.0,299.5 258.5,300.1 260.0,300.4 261.5,300.4 263.0,300.4 264.5,300.4 266.0,300.4 267.5,300.4 269.0,300.4 270.5,300.4 272.0,300.4 273.5,300.3 275.0,300.2 276.5,300.0 278.0,299.9 279.5,299.6 281.0,299.2 282.5,298.6 284.0,297.9 285.5,297.2 287.0,296.6 288.5,296.0 290.0,295.5 291.5,294.9 293.0,294.4 294.5,293.8 296.0,293.3 297.5,292.8 299.0,292.4 300.5,291.9 302.0,291.5 303.5,291.1 305.0,290.8 306.5,290.6 308.0,290.4 309.5,290.1 311.0,289.7 312.5,288.9 314.0,287.8 315.5,286.3 317.0,284.0 318.5,281.5 320.0,279.8 321.5,278.5 323.0,277.3 324.5,276.5 326.0,276.2 327.5,276.1 329.0,276.0 330.5,275.9 332.0,275.9 333.5,276.4 335.0,277.2 336.5,278.0 338.0,278.5 339.5,278.7 341.0,279.0 342.5,279.2 344.0,279.3 345.5,279.4 347.0,279.4 348.5,279.2 350.0,278.9 351.5,278.5 353.0,278.1 354.5,277.6 356.0,277.0 357.5,276.5 359.0,276.1 360.5,275.8 362.0,275.5 363.5,275.3 365.0,275.1 366.5,274.9 368.0,274.7 369.5,274.5 371.0,274.4 372.5,274.3 374.0,274.1 375.5,274.0 377.0,273.9 378.5,273.7 380.0,273.5 381.5,273.4 383.0,273.3 384.5,273.2 386.0,273.1 387.5,273.1 389.0,273.2 390.5,273.3 392.0,273.4 393.5,273.7 395.0,274.2 396.5,274.7 398.0,275.4 399.5,276.0 401.0,276.9 402.5,277.9 404.0,278.8 405.5,279.4 407.0,279.7 408.5,279.9 410.0,280.1 411.5,280.2 413.0,280.3 414.5,280.6 416.0,280.9 417.5,281.6 419.0,282.7 420.5,283.7 422.0,284.7 423.5,285.6 425.0,286.6 426.5,287.4 428.0,287.6 429.5,287.5 431.0,287.2 432.5,286.9 434.0,286.5 435.5,285.9 437.0,285.0 438.5,284.2 440.0,283.5 441.5,283.0 443.0,282.6 444.5,282.2 446.0,281.9 447.5,281.6 449.0,281.2 450.5,280.8 452.0,280.4 453.5,280.1 455.0,279.9 456.5,279.8 458.0,279.8 459.5,279.9 461.0,279.9 462.5,280.0 464.0,280.2 465.5,280.6 467.0,281.1 468.5,281.6 470.0,282.0 471.5,282.2 473.0,282.5 474.5,282.7 476.0,282.9 477.5,283.0 479.0,283.1 480.5,283.2 482.0,283.2 483.5,283.2 485.0,283.3 486.5,283.3 488.0,283.3 489.5,283.4 491.0,283.4 492.5,283.4 494.0,283.5 495.5,283.5 497.0,283.6 498.5,283.7 500.0,283.8 501.5,283.9 503.0,284.1 504.5,284.5 506.0,285.2 507.5,285.9 509.0,286.4 510.5,286.6 512.0,286.6 513.5,286.7 515.0,286.7 516.5,286.8 518.0,287.0 519.5,288.3 521.0,290.0 522.5,291.5 524.0,293.1 525.5,294.5 527.0,295.5 528.5,295.8 530.0,295.9 531.5,296.0 533.0,296.0 534.5,296.1 536.0,296.1 537.5,296.1 539.0,296.1 540.5,296.0 542.0,295.9 543.5,295.9 545.0,295.8 546.5,295.7 548.0,295.3 549.5,294.8 551.0,294.1 552.5,293.4 554.0,292.8 555.5,292.3 557.0,291.8 558.5,291.3 560.0,290.9 561.5,290.4 563.0,290.0 564.5,289.6 566.0,289.1 567.5,288.6 569.0,288.1 570.5,287.6 572.0,287.2 573.5,286.8 575.0,286.4 576.5,286.2 578.0,286.1 579.5,286.0 581.0,285.9 582.5,285.9 584.0,285.8 585.5,285.7 587.0,285.5 588.5,284.8 590.0,283.2 591.5,281.3 593.0,279.7 594.5,278.0 596.0,276.4 597.5,274.9 599.0,273.6 600.5,272.7 602.0,271.8 603.5,271.0 605.0,270.3 606.5,269.9 608.0,269.8 609.5,269.8 611.0,269.8 612.5,269.8 614.0,269.8 615.5,269.8 617.0,269.8 618.5,269.8 620.0,270.2 621.5,270.7 623.0,271.3 624.5,271.9 626.0,272.3 627.5,272.5 629.0,272.7 630.5,272.8 632.0,273.0 633.5,273.2 635.0,273.6 636.5,274.5 638.0,275.6 639.5,276.9 641.0,278.0 642.5,279.4 644.0,280.8 645.5,282.0 647.0,282.8 648.5,283.5 650.0,284.1 651.5,284.4 653.0,284.5 654.5,284.5 656.0,284.5 657.5,284.5 659.0,284.5 660.5,284.5 662.0,284.5 663.5,284.5 665.0,284.5 666.5,284.5 668.0,284.4 669.5,284.3 671.0,284.1 672.5,284.0 674.0,283.8 675.5,283.6 677.0,283.5 678.5,283.4 680.0,283.2 681.5,283.1 683.0,282.9 684.5,282.6 686.0,282.1 687.5,280.7 689.0,278.8 690.5,277.0 692.0,275.6 693.5,274.4 695.0,273.3 696.5,272.2 698.0,271.2 699.5,270.1 701.0,269.0 702.5,267.7 704.0,266.5 705.5,265.6 707.0,265.1 708.5,265.1 710.0,265.2 711.5,265.3 713.0,265.4 714.5,265.6 716.0,266.0 717.5,266.6 719.0,267.2 720.5,267.8 722.0,268.3 723.5,268.6 725.0,269.0 726.5,269.3 728.0,269.6 729.5,270.0 731.0,270.3 732.5,270.7 734.0,271.2 735.5,271.8 737.0,272.4 738.5,272.9 740.0,273.5 741.5,274.1 743.0,274.6 744.5,275.0 746.0,275.4 747.5,275.8 749.0,276.2 750.5,276.7 752.0,277.2 753.5,277.9 755.0,278.8 756.5,279.9 758.0,280.9 759.5,281.7 761.0,282.3 762.5,282.7 764.0,283.1 765.5,283.4 767.0,283.5 768.5,283.7 770.0,283.8 771.5,283.9 773.0,284.0 774.5,284.1 776.0,284.1 777.5,284.1 779.0,284.1 780.5,284.1 782.0,284.1 783.5,284.1 785.0,284.1 786.5,284.1 788.0,284.1 789.5,284.1 791.0,284.3 792.5,284.7 794.0,285.4 795.5,286.2 797.0,286.9 798.5,287.6 800.0,288.3 801.5,289.1 803.0,290.1 804.5,291.3 806.0,292.9 807.5,294.9 809.0,296.8 810.5,298.5 812.0,300.2 813.5,302.0 815.0,303.6 816.5,305.0 818.0,305.9 819.5,306.5 821.0,307.1 822.5,307.6 824.0,307.8 825.5,307.9 827.0,307.7 828.5,307.2 830.0,306.7 831.5,306.1 833.0,305.7 834.5,305.4 836.0,305.0 837.5,304.7 839.0,304.3 840.5,304.0 842.0,303.6 843.5,303.3 845.0,302.8 846.5,302.4 848.0,301.9 849.5,301.2 851.0,300.6 852.5,299.9 854.0,299.2 855.5,298.6 857.0,298.1 858.5,297.7 860.0,297.4 861.5,297.0 863.0,296.7 864.5,296.4 866.0,296.1 867.5,295.7 869.0,295.4 870.5,295.1 872.0,294.7 873.5,294.1 875.0,293.2 876.5,292.0 878.0,290.8 879.5,289.9 881.0,289.4 882.5,289.1 884.0,288.9 885.5,288.7 887.0,288.5 888.5,288.3 890.0,288.1 891.5,287.9 893.0,287.7 894.5,287.5 896.0,287.3 897.5,287.1 899.0,287.0 899.6,286.9" fill="none" stroke="#17781c" stroke-width="2.2" stroke-linejoin="round"/>
<polyline points="9.5,351.7 14.2,357.8 19.3,342.5 22.3,347.6 26.4,348.6 29.5,342.5 38.6,341.5 45.8,350.7 50.9,345.2 60.0,347.2 64.1,341.5 70.2,330.3 76.4,342.1 81.5,338.4 88.6,346.2 96.7,348.2 111.0,345.2 117.1,346.6 123.2,342.9 127.3,342.5 130.4,351.7 134.5,350.7 137.5,358.8 143.6,364.9 150.8,356.8 153.8,359.4 162.0,358.2 168.1,354.3 172.2,351.3 177.3,353.3 179.3,343.5 182.4,348.2 186.5,349.6 189.5,353.7 193.6,352.3 198.7,355.8 201.1,356.8 208.3,356.8 215.4,363.3 223.5,358.2 228.6,363.3 232.7,361.3 237.4,354.3 242.9,363.9 247.0,368.0 250.0,367.0 257.2,373.5 263.3,365.9 269.4,371.5 273.5,368.4 277.6,367.6 281.6,364.9 289.8,364.3 293.9,358.4 296.9,365.9 303.1,358.4 306.1,362.5 312.2,355.8 316.3,339.4 321.4,347.6 326.5,341.5 328.5,348.6 335.7,351.1 344.8,346.6 347.9,354.3 354.0,342.9 358.1,346.0 364.2,346.6 374.4,344.5 377.0,340.5 382.6,342.5 388.7,342.5 393.8,344.6 397.2,345.6 400.3,350.7 405.4,350.3 407.4,352.3 410.5,347.2 412.5,349.6 414.6,347.6 420.7,357.4 428.8,359.4 433.9,347.2 440.0,348.6 443.7,352.3 448.2,347.2 455.3,345.6 460.4,347.6 462.5,353.3 469.6,350.7 474.7,355.3 482.9,349.6 484.9,352.3 486.9,350.3 493.1,354.3 495.1,351.7 499.2,354.3 503.2,355.1 508.3,359.4 511.4,357.4 516.5,357.4 518.5,359.4 522.0,374.1 525.7,371.0 532.8,363.3 538.9,368.0 543.0,363.3 548.1,360.9 555.2,360.4 558.7,363.3 562.0,358.4 569.5,358.2 574.6,351.7 578.1,356.8 580.1,355.3 583.2,358.8 585.6,358.2 588.3,348.6 593.3,335.4 599.5,333.3 605.6,339.0 606.6,336.4 611.7,337.0 615.8,340.5 619.9,338.0 626.0,345.2 630.0,338.4 633.1,345.6 640.2,351.7 643.3,355.1 648.4,355.1 653.5,352.3 658.6,354.3 664.7,352.7 669.8,349.6 672.9,351.3 678.0,351.1 679.4,348.6 682.0,353.7 686.1,336.4 692.2,330.7 696.3,334.3 703.4,328.6 707.5,330.3 713.6,336.4 716.7,335.4 718.7,337.0 726.9,332.3 733.0,340.1 738.1,343.5 743.2,339.4 748.3,347.2 750.3,345.6 755.4,349.6 757.5,355.3 761.5,350.7 763.6,352.3 766.6,351.1 769.1,351.3 774.2,353.7 780.3,352.3 785.4,350.0 790.5,354.7 797.6,361.9 801.3,358.4 804.8,371.0 807.8,376.6 810.9,371.0 818.0,376.1 821.1,373.7 824.1,375.1 828.2,367.0 832.3,369.4 842.5,371.0 851.6,370.0 853.7,363.3 855.7,364.9 858.8,370.6 863.9,356.8 865.9,361.9 870.0,360.9 876.1,348.2 877.1,355.8 882.2,357.4 886.3,356.8 890.4,352.3 895.5,355.8 897.5,357.4 899.6,355.8" fill="none" stroke="#e0922c" stroke-width="1.1" stroke-linejoin="round"/>
<rect x="30" y="320.6" width="869" height="1.3" fill="#1c24a0"/>
<rect x="10" y="380.8" width="867" height="1.3" fill="#1c24a0"/>
<g shape-rendering="crispEdges">
<rect x="9.5" y="25.5" width="916" height="230" fill="none" stroke="#6f6f6f" stroke-width="1"/>
<rect x="9.5" y="261.5" width="916" height="51" fill="none" stroke="#6f6f6f" stroke-width="1"/>
<rect x="9.5" y="318.5" width="916" height="66" fill="none" stroke="#6f6f6f" stroke-width="1"/>
<line x1="926" y1="55.5" x2="929" y2="55.5" stroke="#6f6f6f"/>
<line x1="926" y1="100.5" x2="929" y2="100.5" stroke="#6f6f6f"/>
<line x1="926" y1="145.5" x2="929" y2="145.5" stroke="#6f6f6f"/>
<line x1="926" y1="189.5" x2="929" y2="189.5" stroke="#6f6f6f"/>
<line x1="926" y1="234.5" x2="929" y2="234.5" stroke="#6f6f6f"/>
<line x1="926" y1="282.5" x2="929" y2="282.5" stroke="#6f6f6f"/>
<line x1="926" y1="351.5" x2="929" y2="351.5" stroke="#6f6f6f"/>
<line x1="926" y1="189.5" x2="929" y2="189.5" stroke="#777"/>
<line x1="155.5" y1="385" x2="155.5" y2="388" stroke="#555"/>
<line x1="213.5" y1="385" x2="213.5" y2="388" stroke="#555"/>
<line x1="270.5" y1="385" x2="270.5" y2="388" stroke="#555"/>
<line x1="328.5" y1="385" x2="328.5" y2="388" stroke="#555"/>
<line x1="378.5" y1="385" x2="378.5" y2="388" stroke="#555"/>
<line x1="436.5" y1="385" x2="436.5" y2="388" stroke="#555"/>
<line x1="494.5" y1="385" x2="494.5" y2="388" stroke="#555"/>
<line x1="551.5" y1="385" x2="551.5" y2="388" stroke="#555"/>
<line x1="609.5" y1="385" x2="609.5" y2="388" stroke="#555"/>
<line x1="659.5" y1="385" x2="659.5" y2="388" stroke="#555"/>
<line x1="717.5" y1="385" x2="717.5" y2="388" stroke="#555"/>
<line x1="774.5" y1="385" x2="774.5" y2="388" stroke="#555"/>
<line x1="832.5" y1="385" x2="832.5" y2="388" stroke="#555"/>
<line x1="876.5" y1="392" x2="876.5" y2="406" stroke="#b8b8b8"/>
</g>
<text x="933.6" y="61" font-size="9.2" fill="#111" textLength="37.7" lengthAdjust="spacingAndGlyphs">1.0700</text>
<text x="933.6" y="106" font-size="9.2" fill="#111" textLength="37.7" lengthAdjust="spacingAndGlyphs">1.0600</text>
<text x="933.6" y="151" font-size="9.2" fill="#111" textLength="37.7" lengthAdjust="spacingAndGlyphs">1.0500</text>
<text x="933.6" y="194.6" font-size="9.2" fill="#111" textLength="37.7" lengthAdjust="spacingAndGlyphs">1.0400</text>
<text x="933.6" y="240" font-size="9.2" fill="#111" textLength="37.7" lengthAdjust="spacingAndGlyphs">1.0300</text>
<text x="934" y="288" font-size="9.2" fill="#111" textLength="28.5" lengthAdjust="spacingAndGlyphs">-0.00</text>
<text x="933.8" y="357" font-size="9.2" fill="#111" textLength="12.4" lengthAdjust="spacingAndGlyphs">50</text>
<rect x="933" y="182" width="39" height="11.7" fill="#f6a61a"/>
<text x="934.2" y="191.8" font-size="9.2" fill="#fffcd8" textLength="37" lengthAdjust="spacingAndGlyphs">1.0404</text>
<rect x="10" y="26" width="304" height="12" fill="#fff"/>
<text x="11.8" y="36" font-size="9.6" fill="#b00008" stroke="#b00008" stroke-width="0.25" textLength="146.5" lengthAdjust="spacingAndGlyphs">Exponential_Moving_Average</text>
<text x="164.5" y="36" font-size="9.6" fill="#00009c" stroke="#00009c" stroke-width="0.25" textLength="147" lengthAdjust="spacingAndGlyphs">Exponential_Moving_Average</text>
<rect x="11" y="263" width="34" height="11" fill="#fff"/>
<text x="12" y="272" font-size="9.4" fill="#10108c" textLength="31.3" lengthAdjust="spacing">MACD</text>
<rect x="11" y="320" width="19" height="12" fill="#fff"/>
<text x="12" y="329.7" font-size="9.2" fill="#e0861a" textLength="17.3" lengthAdjust="spacing">RSI</text>
<rect x="10" y="377" width="70.5" height="16" fill="#7f9dbc"/>
<text x="16.8" y="388.6" font-size="8.9" fill="#f0f5fb" textLength="57.7" lengthAdjust="spacingAndGlyphs">Июль 2010</text>
<rect x="876.5" y="377" width="59.5" height="16" fill="#7f9dbc"/>
<text x="883" y="388.6" font-size="8.9" fill="#f0f5fb" textLength="47.3" lengthAdjust="spacingAndGlyphs">Авг 2010</text>
<text transform="translate(34.2,405.2) scale(1.12,1)" font-size="8.9" fill="#111">12<tspan fill="#8a8a8a">/Пн</tspan></text>
<text transform="translate(85.2,405.2) scale(1.12,1)" font-size="8.9" fill="#111">13<tspan fill="#8a8a8a">/Вт</tspan></text>
<text transform="translate(142.2,405.2) scale(1.12,1)" font-size="8.9" fill="#111">14<tspan fill="#8a8a8a">/Ср</tspan></text>
<text transform="translate(200.2,405.2) scale(1.12,1)" font-size="8.9" fill="#111">15<tspan fill="#8a8a8a">/Чт</tspan></text>
<text transform="translate(257.2,405.2) scale(1.12,1)" font-size="8.9" fill="#111">16<tspan fill="#8a8a8a">/Пт</tspan></text>
<text transform="translate(315.2,405.2) scale(1.12,1)" font-size="8.9" fill="#111">19<tspan fill="#8a8a8a">/Пн</tspan></text>
<text transform="translate(365.2,405.2) scale(1.12,1)" font-size="8.9" fill="#111">20<tspan fill="#8a8a8a">/Вт</tspan></text>
<text transform="translate(423.2,405.2) scale(1.12,1)" font-size="8.9" fill="#111">21<tspan fill="#8a8a8a">/Ср</tspan></text>
<text transform="translate(481.2,405.2) scale(1.12,1)" font-size="8.9" fill="#111">22<tspan fill="#8a8a8a">/Чт</tspan></text>
<text transform="translate(538.2,405.2) scale(1.12,1)" font-size="8.9" fill="#111">23<tspan fill="#8a8a8a">/Пт</tspan></text>
<text transform="translate(596.2,405.2) scale(1.12,1)" font-size="8.9" fill="#111">26<tspan fill="#8a8a8a">/Пн</tspan></text>
<text transform="translate(646.2,405.2) scale(1.12,1)" font-size="8.9" fill="#111">27<tspan fill="#8a8a8a">/Вт</tspan></text>
<text transform="translate(704.2,405.2) scale(1.12,1)" font-size="8.9" fill="#111">28<tspan fill="#8a8a8a">/Ср</tspan></text>
<text transform="translate(761.2,405.2) scale(1.12,1)" font-size="8.9" fill="#111">29<tspan fill="#8a8a8a">/Чт</tspan></text>
<text transform="translate(819.2,405.2) scale(1.12,1)" font-size="8.9" fill="#111">30<tspan fill="#8a8a8a">/Пт</tspan></text>
<text transform="translate(883,405.2) scale(1.12,1)" font-size="8.9" fill="#111">2<tspan fill="#8a8a8a">/Пн</tspan></text>
</svg>
</body></html>
